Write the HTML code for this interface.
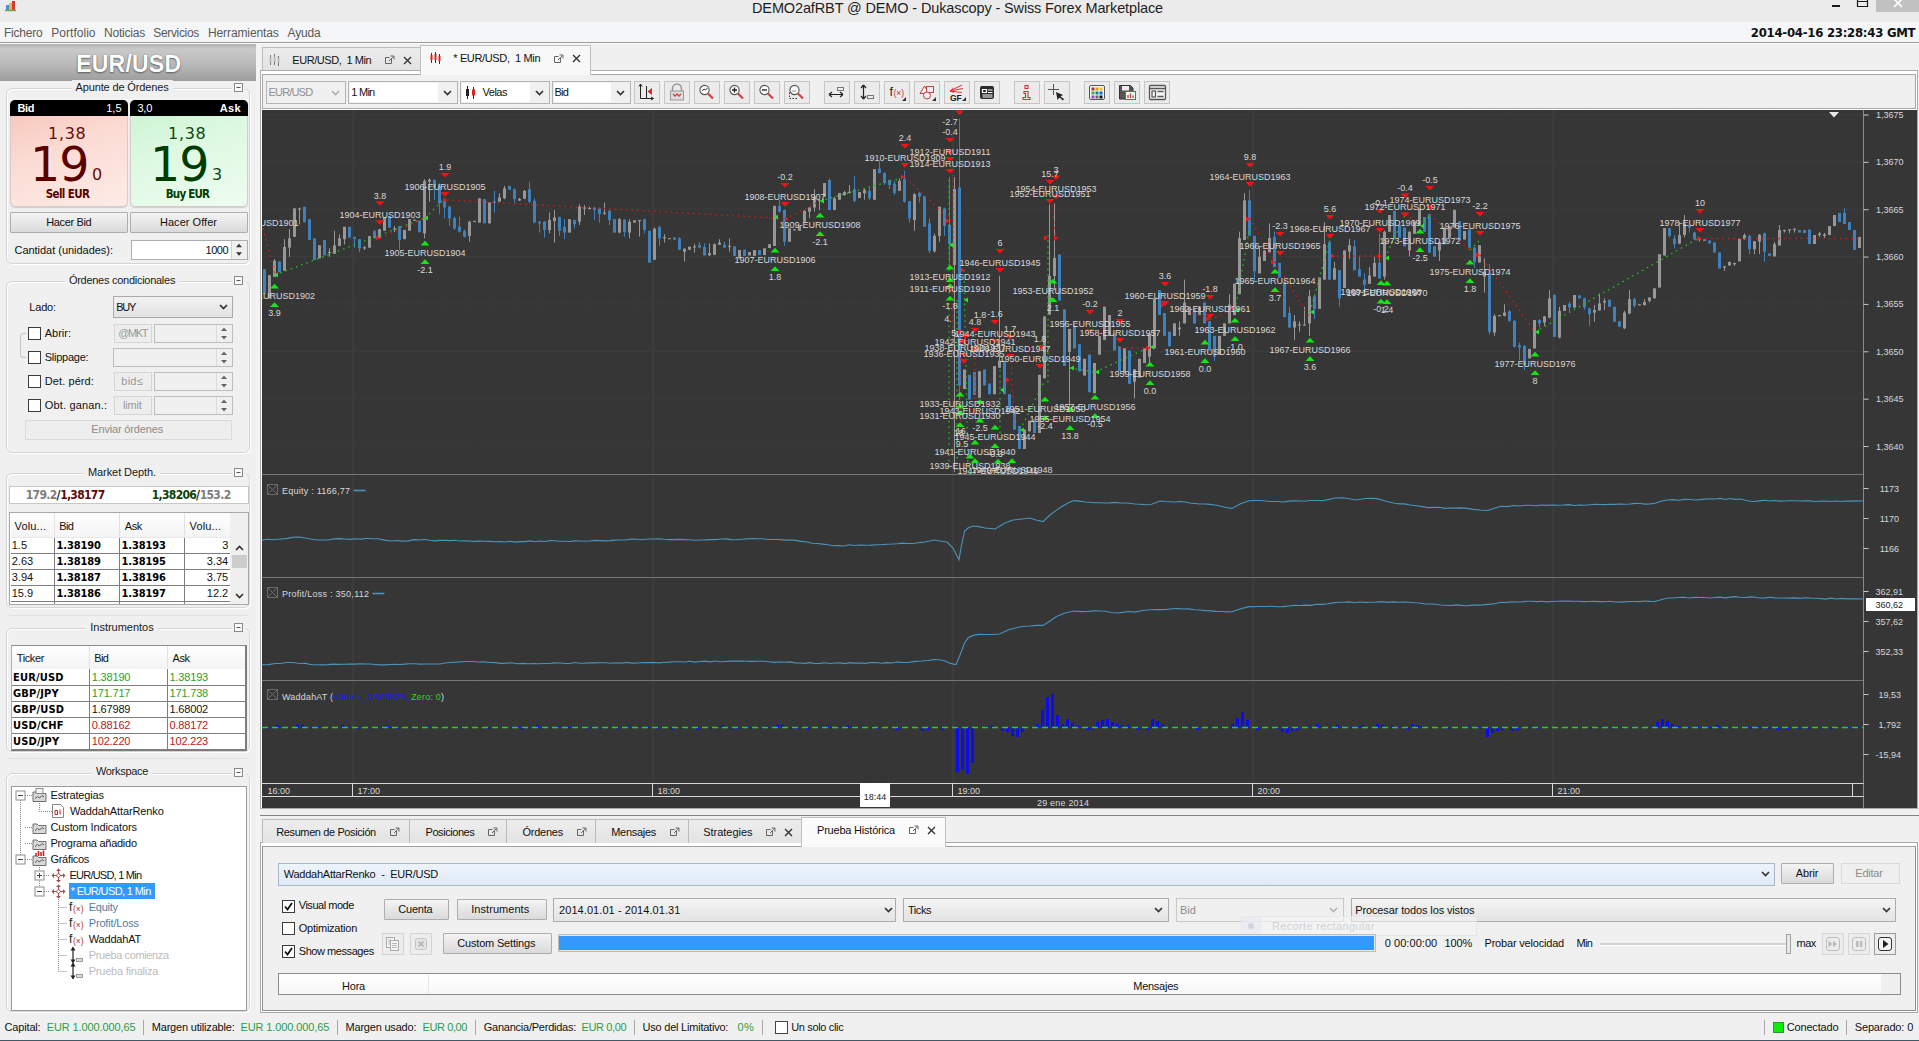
<!DOCTYPE html>
<html lang="es"><head><meta charset="utf-8"><title>DEMO2afRBT @ DEMO - Dukascopy - Swiss Forex Marketplace</title>
<style>
html,body{margin:0;padding:0;}
body{width:1919px;height:1041px;overflow:hidden;background:#f0f0f0;position:relative;font-family:"Liberation Sans",sans-serif;}
#app{position:absolute;left:0;top:0;width:1919px;height:1041px;overflow:hidden;background:#f0f0f0;}
#app div,#app span,#app svg{position:absolute;box-sizing:border-box;}
#app svg{overflow:visible;}
#app svg.clip{overflow:hidden;}
.btn{background:linear-gradient(#f4f4f4,#e4e4e4 60%,#dadada);border:1px solid #adadad;border-radius:1px;}
.fld{background:#fff;border:1px solid #abadb3;}
.grp{border:1px solid #d5d5d5;border-radius:6px;box-shadow:inset 1px 1px 0 #fff, 1px 1px 0 #fff;}
</style></head>
<body><div id="app">
<!-- p_chrome -->
<div style="left:0px;top:0px;width:1919px;height:22px;background:#ebebeb;"></div>
<span style="top:0.73px;font:normal 14.5px/1 'Liberation Sans', sans-serif;color:#1e1e1e;white-space:pre;letter-spacing:-0.13px;left:752px;">DEMO2afRBT @ DEMO - Dukascopy - Swiss Forex Marketplace</span>
<svg style="left:4px;top:0;width:16px;height:12px" viewBox="0 0 16 12"><rect x="2" y="5" width="3" height="5" fill="#4a8fd8"/><rect x="5" y="3" width="3" height="7" fill="#e9b53a"/><rect x="8" y="1" width="3" height="9" fill="#d23a3a"/><path d="M1 10.5 L12 10.5" stroke="#6aa84f" stroke-width="1.5"/></svg>
<div style="left:1876px;top:0px;width:43px;height:12px;background:#c1c1c1;"></div>
<svg style="left:1826px;top:0;width:93px;height:14px" viewBox="0 0 93 14"><rect x="6" y="5" width="8" height="2" fill="#1a1a1a"/><path d="M31.5 -1 V6.5 H41.5 V-1 M31.5 1.5 H41.5" stroke="#1a1a1a" fill="none" stroke-width="1.2"/><path d="M68 -1 L76 7 M76 -1 L68 7" stroke="#fff" stroke-width="1.6"/></svg>
<div style="left:0px;top:22px;width:1919px;height:21px;background:#f5f6f7;"></div>
<div style="left:0px;top:42px;width:1919px;height:1px;background:#9c9c9c;"></div>
<div style="left:0px;top:43px;width:1919px;height:1px;background:#fafafa;"></div>
<span style="top:26.84px;font:normal 12px/1 'Liberation Sans', sans-serif;color:#5a5a5a;white-space:pre;letter-spacing:-0.22px;left:4px;">Fichero</span>
<span style="top:26.84px;font:normal 12px/1 'Liberation Sans', sans-serif;color:#5a5a5a;white-space:pre;letter-spacing:0.03px;left:51.25px;">Portfolio</span>
<span style="top:26.84px;font:normal 12px/1 'Liberation Sans', sans-serif;color:#5a5a5a;white-space:pre;letter-spacing:-0.21px;left:104px;">Noticias</span>
<span style="top:26.84px;font:normal 12px/1 'Liberation Sans', sans-serif;color:#5a5a5a;white-space:pre;letter-spacing:-0.33px;left:153.25px;">Servicios</span>
<span style="top:26.84px;font:normal 12px/1 'Liberation Sans', sans-serif;color:#5a5a5a;white-space:pre;letter-spacing:-0.11px;left:208px;">Herramientas</span>
<span style="top:26.84px;font:normal 12px/1 'Liberation Sans', sans-serif;color:#5a5a5a;white-space:pre;letter-spacing:-0.16px;left:287.5px;">Ayuda</span>
<span style="top:26px;font:bold 13px/1 'DejaVu Sans Condensed', 'DejaVu Sans', 'Liberation Sans', sans-serif;color:#111;white-space:pre;letter-spacing:-0.25px;left:1750.75px;">2014-04-16 23:28:43 GMT</span>
<div style="left:0px;top:1013px;width:1919px;height:28px;background:#f0f0f0;"></div>
<div style="left:0px;top:1039.5px;width:1919px;height:2px;background:#3f5868;"></div>
<span style="top:1021.94px;font:normal 11px/1 'Liberation Sans', sans-serif;color:#111;white-space:pre;letter-spacing:-0.16px;left:4.5px;">Capital:</span>
<span style="top:1021.94px;font:normal 11px/1 'Liberation Sans', sans-serif;color:#2a9d4a;white-space:pre;letter-spacing:-0.11px;left:46.75px;">EUR 1.000.000,65</span>
<span style="top:1021.94px;font:normal 11px/1 'Liberation Sans', sans-serif;color:#111;white-space:pre;letter-spacing:-0.19px;left:151.75px;">Margen utilizable:</span>
<span style="top:1021.94px;font:normal 11px/1 'Liberation Sans', sans-serif;color:#2a9d4a;white-space:pre;letter-spacing:-0.11px;left:240.5px;">EUR 1.000.000,65</span>
<span style="top:1021.94px;font:normal 11px/1 'Liberation Sans', sans-serif;color:#111;white-space:pre;letter-spacing:-0.2px;left:345.5px;">Margen usado:</span>
<span style="top:1021.94px;font:normal 11px/1 'Liberation Sans', sans-serif;color:#2a9d4a;white-space:pre;letter-spacing:-0.4px;left:422.5px;">EUR 0,00</span>
<span style="top:1021.94px;font:normal 11px/1 'Liberation Sans', sans-serif;color:#111;white-space:pre;letter-spacing:-0.24px;left:483.75px;">Ganancia/Perdidas:</span>
<span style="top:1021.94px;font:normal 11px/1 'Liberation Sans', sans-serif;color:#2a9d4a;white-space:pre;letter-spacing:-0.37px;left:581.5px;">EUR 0,00</span>
<span style="top:1021.94px;font:normal 11px/1 'Liberation Sans', sans-serif;color:#111;white-space:pre;letter-spacing:-0.22px;left:642.5px;">Uso del Limitativo:</span>
<span style="top:1021.94px;font:normal 11px/1 'Liberation Sans', sans-serif;color:#2a9d4a;white-space:pre;letter-spacing:0.43px;left:737.5px;">0%</span>
<span style="top:1021.94px;font:normal 11px/1 'Liberation Sans', sans-serif;color:#111;white-space:pre;letter-spacing:-0.35px;left:791.25px;">Un solo clic</span>
<span style="top:1021.94px;font:normal 11px/1 'Liberation Sans', sans-serif;color:#111;white-space:pre;letter-spacing:-0.18px;left:1786.8px;">Conectado</span>
<span style="top:1021.94px;font:normal 11px/1 'Liberation Sans', sans-serif;color:#111;white-space:pre;letter-spacing:-0.13px;left:1854.7px;">Separado: 0</span>
<div style="left:143px;top:1020px;width:1px;height:15px;background:#a8a8a8;"></div>
<div style="left:337px;top:1020px;width:1px;height:15px;background:#a8a8a8;"></div>
<div style="left:475px;top:1020px;width:1px;height:15px;background:#a8a8a8;"></div>
<div style="left:634px;top:1020px;width:1px;height:15px;background:#a8a8a8;"></div>
<div style="left:762px;top:1020px;width:1px;height:15px;background:#a8a8a8;"></div>
<div style="left:1764px;top:1020px;width:1px;height:15px;background:#a8a8a8;"></div>
<div style="left:1846px;top:1020px;width:1px;height:15px;background:#a8a8a8;"></div>
<div style="left:775px;top:1020.5px;width:13px;height:13px;background:#fff;border:1px solid #444;"></div>
<div style="left:1773px;top:1022px;width:11px;height:11px;background:#0cec0c;border:1px solid #2a9a2a;"></div>
<!-- p_left -->
<div style="left:0px;top:44px;width:256px;height:969px;background:#f0f0f0;"></div>
<div style="left:256px;top:44px;width:4px;height:969px;background:#f3f3f3;"></div>
<div style="left:0px;top:44px;width:256px;height:37px;background:linear-gradient(#b2b2b2 0,#c9c9c9 14%,#bcbcbc 50%,#9d9d9d 100%);"></div>
<span style="top:52.53px;font:bold 23px/1 'Liberation Sans', sans-serif;color:#fff;white-space:pre;letter-spacing:0.21px;left:76.25px;text-shadow:0 1px 2px rgba(0,0,0,.45),0 0 1px rgba(0,0,0,.4);">EUR/USD</span>
<div class="grp" style="left:6px;top:88px;width:244px;height:176px;"></div>
<div style="left:71.5px;top:80px;width:101px;height:16px;background:#f0f0f0;"></div>
<span style="top:81.94px;font:normal 11px/1 'Liberation Sans', sans-serif;color:#1a1a1a;white-space:pre;letter-spacing:-0.14px;left:75.5px;">Apunte de Órdenes</span>
<div style="left:232px;top:82px;width:14px;height:12px;background:#f0f0f0;"></div>
<svg style="left:234px;top:83px;width:10px;height:10px" viewBox="0 0 10 10"><rect x="0.5" y="0.5" width="8" height="8" fill="#fafafa" stroke="#8a8a8a"/><path d="M2.5 4.5 H6.5" stroke="#555" stroke-width="1"/></svg>
<div style="left:10px;top:100px;width:117.5px;height:106.5px;background:linear-gradient(160deg,#f6c3b8,#fbdcd4 45%,#fdebe6);border:1px solid #d9c9c9;border-radius:5px;box-shadow:0 1px 1px #cfcfcf;"></div>
<div style="left:10px;top:100px;width:117.5px;height:16px;background:#000;border-radius:5px 5px 0 0;"></div>
<span style="top:102.69px;font:bold 11px/1 'Liberation Sans', sans-serif;color:#fff;white-space:pre;letter-spacing:-0.41px;left:17.5px;">Bid</span>
<span style="top:102.69px;font:normal 11px/1 'Liberation Sans', sans-serif;color:#fff;white-space:pre;letter-spacing:-0.01px;left:-478.51px;width:600px;text-align:right;">1,5</span>
<span style="top:125.66px;font:normal 16px/1 'DejaVu Sans', 'Liberation Sans', sans-serif;color:#6b0a0a;white-space:pre;letter-spacing:0.72px;left:48px;">1,38</span>
<span style="top:141.29px;font:normal 47.5px/1 'DejaVu Sans', 'Liberation Sans', sans-serif;color:#5a0000;white-space:pre;letter-spacing:-1px;left:30px;">19</span>
<span style="top:167.26px;font:normal 16px/1 'DejaVu Sans', 'Liberation Sans', sans-serif;color:#6b0a0a;white-space:pre;left:92px;">0</span>
<span style="top:188.57px;font:bold 11.5px/1 'DejaVu Sans Condensed', 'DejaVu Sans', 'Liberation Sans', sans-serif;color:#5a0000;white-space:pre;letter-spacing:-0.64px;left:45.75px;">Sell EUR</span>
<div style="left:130px;top:100px;width:117.5px;height:106.5px;background:linear-gradient(160deg,#c9f3d0,#def9e2 45%,#eefcf0);border:1px solid #d9c9c9;border-radius:5px;box-shadow:0 1px 1px #cfcfcf;"></div>
<div style="left:130px;top:100px;width:117.5px;height:16px;background:#000;border-radius:5px 5px 0 0;"></div>
<span style="top:102.69px;font:normal 11px/1 'Liberation Sans', sans-serif;color:#fff;white-space:pre;letter-spacing:-0.26px;left:137.5px;">3,0</span>
<span style="top:102.69px;font:bold 11px/1 'Liberation Sans', sans-serif;color:#fff;white-space:pre;letter-spacing:0.27px;left:-359.23px;width:600px;text-align:right;">Ask</span>
<span style="top:125.66px;font:normal 16px/1 'DejaVu Sans', 'Liberation Sans', sans-serif;color:#0c4a0c;white-space:pre;letter-spacing:0.72px;left:168px;">1,38</span>
<span style="top:141.29px;font:normal 47.5px/1 'DejaVu Sans', 'Liberation Sans', sans-serif;color:#003c00;white-space:pre;letter-spacing:-1px;left:150px;">19</span>
<span style="top:167.26px;font:normal 16px/1 'DejaVu Sans', 'Liberation Sans', sans-serif;color:#0c4a0c;white-space:pre;left:212px;">3</span>
<span style="top:188.57px;font:bold 11.5px/1 'DejaVu Sans Condensed', 'DejaVu Sans', 'Liberation Sans', sans-serif;color:#003c00;white-space:pre;letter-spacing:-0.79px;left:165.75px;">Buy EUR</span>
<div class="btn" style="left:10px;top:212px;width:117.5px;height:20.5px;"></div>
<div class="btn" style="left:130px;top:212px;width:117.5px;height:20.5px;"></div>
<span style="top:216.69px;font:normal 11px/1 'Liberation Sans', sans-serif;color:#111;white-space:pre;letter-spacing:-0.37px;left:46.25px;">Hacer Bid</span>
<span style="top:216.69px;font:normal 11px/1 'Liberation Sans', sans-serif;color:#111;white-space:pre;letter-spacing:0.03px;left:160px;">Hacer Offer</span>
<span style="top:245.19px;font:normal 11px/1 'Liberation Sans', sans-serif;color:#111;white-space:pre;letter-spacing:-0.03px;left:14.5px;">Cantidat (unidades):</span>
<div class="fld" style="left:131px;top:240px;width:116.5px;height:19.5px;"></div>
<span style="top:245.19px;font:normal 11px/1 'Liberation Sans', sans-serif;color:#111;white-space:pre;letter-spacing:-0.49px;left:205.5px;">1000</span>
<div style="left:231px;top:241px;width:15.5px;height:17.5px;background:#f0f0f0;border-left:1px solid #d0d0d0;"></div>
<svg style="left:232px;top:240px;width:14px;height:19.5px" viewBox="0 0 14 19.5"><path d="M4 7.25 L7 3.75 L10 7.25 Z M4 12.25 L7 15.75 L10 12.25 Z" fill="#333"/></svg>
<div class="grp" style="left:6px;top:281px;width:244px;height:172px;"></div>
<div style="left:64.88px;top:273px;width:114.25px;height:16px;background:#f0f0f0;"></div>
<span style="top:274.94px;font:normal 11px/1 'Liberation Sans', sans-serif;color:#1a1a1a;white-space:pre;letter-spacing:-0.27px;left:68.88px;">Órdenes condicionales</span>
<div style="left:232px;top:275px;width:14px;height:12px;background:#f0f0f0;"></div>
<svg style="left:234px;top:276px;width:10px;height:10px" viewBox="0 0 10 10"><rect x="0.5" y="0.5" width="8" height="8" fill="#fafafa" stroke="#8a8a8a"/><path d="M2.5 4.5 H6.5" stroke="#555" stroke-width="1"/></svg>
<span style="top:302.19px;font:normal 11px/1 'Liberation Sans', sans-serif;color:#111;white-space:pre;letter-spacing:-0.16px;left:29.25px;">Lado:</span>
<div style="left:113px;top:295.5px;width:119.5px;height:22.5px;background:linear-gradient(#f2f2f2,#e2e2e2);border:1px solid #aaa;"></div>
<span style="top:302.19px;font:normal 11px/1 'Liberation Sans', sans-serif;color:#111;white-space:pre;letter-spacing:-1.29px;left:116.25px;">BUY</span>
<svg style="left:218.5px;top:304px;width:9px;height:6px" viewBox="0 0 9 6"><path d="M1 1 L4.5 4.5 L8 1" fill="none" stroke="#333" stroke-width="1.7"/></svg>
<div style="left:19.5px;top:333px;width:6px;height:25px;border:1px solid #c4c4c4;border-right:none;border-radius:4px 0 0 4px;"></div>
<div style="left:28px;top:327px;width:13px;height:13px;background:#fff;border:1px solid #3c3c3c;"></div>
<span style="top:327.69px;font:normal 11px/1 'Liberation Sans', sans-serif;color:#111;white-space:pre;letter-spacing:-0.01px;left:44.75px;">Abrir:</span>
<div style="left:114px;top:323.5px;width:38px;height:19px;background:#eee;border:1px solid #d6d6d6;"></div>
<span style="top:327.69px;font:normal 11px/1 'Liberation Sans', sans-serif;color:#999;white-space:pre;letter-spacing:-1.41px;left:118.25px;">@MKT</span>
<div style="left:154px;top:323.5px;width:78.5px;height:19px;background:#f0f0f0;border:1px solid #bdbdbd;"></div>
<div style="left:216px;top:324.5px;width:1px;height:17px;background:#dcdcdc;"></div>
<svg style="left:217px;top:323.5px;width:14px;height:19px" viewBox="0 0 14 19"><path d="M4 7.0 L7 3.5 L10 7.0 Z M4 12.0 L7 15.5 L10 12.0 Z" fill="#666"/></svg>
<div style="left:28px;top:351px;width:13px;height:13px;background:#fff;border:1px solid #3c3c3c;"></div>
<span style="top:351.69px;font:normal 11px/1 'Liberation Sans', sans-serif;color:#111;white-space:pre;letter-spacing:-0.26px;left:44.75px;">Slippage:</span>
<div style="left:113px;top:347.5px;width:119.5px;height:19px;background:#f0f0f0;border:1px solid #bdbdbd;"></div>
<div style="left:216px;top:348.5px;width:1px;height:17px;background:#dcdcdc;"></div>
<svg style="left:217px;top:347.5px;width:14px;height:19px" viewBox="0 0 14 19"><path d="M4 7.0 L7 3.5 L10 7.0 Z M4 12.0 L7 15.5 L10 12.0 Z" fill="#666"/></svg>
<div style="left:28px;top:375px;width:13px;height:13px;background:#fff;border:1px solid #3c3c3c;"></div>
<span style="top:375.69px;font:normal 11px/1 'Liberation Sans', sans-serif;color:#111;white-space:pre;letter-spacing:0.09px;left:44.75px;">Det. pérd:</span>
<div style="left:114px;top:371.5px;width:38px;height:19px;background:#eee;border:1px solid #d6d6d6;"></div>
<span style="top:375.69px;font:normal 11px/1 'Liberation Sans', sans-serif;color:#999;white-space:pre;letter-spacing:0.26px;left:121.25px;">bid≤</span>
<div style="left:154px;top:371.5px;width:78.5px;height:19px;background:#f0f0f0;border:1px solid #bdbdbd;"></div>
<div style="left:216px;top:372.5px;width:1px;height:17px;background:#dcdcdc;"></div>
<svg style="left:217px;top:371.5px;width:14px;height:19px" viewBox="0 0 14 19"><path d="M4 7.0 L7 3.5 L10 7.0 Z M4 12.0 L7 15.5 L10 12.0 Z" fill="#666"/></svg>
<div style="left:28px;top:399px;width:13px;height:13px;background:#fff;border:1px solid #3c3c3c;"></div>
<span style="top:399.69px;font:normal 11px/1 'Liberation Sans', sans-serif;color:#111;white-space:pre;letter-spacing:0.16px;left:44.75px;">Obt. ganan.:</span>
<div style="left:114px;top:395.5px;width:38px;height:19px;background:#eee;border:1px solid #d6d6d6;"></div>
<span style="top:399.69px;font:normal 11px/1 'Liberation Sans', sans-serif;color:#999;white-space:pre;letter-spacing:-0.16px;left:123px;">limit</span>
<div style="left:154px;top:395.5px;width:78.5px;height:19px;background:#f0f0f0;border:1px solid #bdbdbd;"></div>
<div style="left:216px;top:396.5px;width:1px;height:17px;background:#dcdcdc;"></div>
<svg style="left:217px;top:395.5px;width:14px;height:19px" viewBox="0 0 14 19"><path d="M4 7.0 L7 3.5 L10 7.0 Z M4 12.0 L7 15.5 L10 12.0 Z" fill="#666"/></svg>
<div style="left:25px;top:419.5px;width:206.5px;height:20px;background:#eee;border:1px solid #dadada;"></div>
<span style="top:424.19px;font:normal 11px/1 'Liberation Sans', sans-serif;color:#8c8c8c;white-space:pre;letter-spacing:-0.16px;left:91.25px;">Enviar órdenes</span>
<div class="grp" style="left:6px;top:473px;width:244px;height:135px;"></div>
<div style="left:84px;top:465px;width:76px;height:16px;background:#f0f0f0;"></div>
<span style="top:466.94px;font:normal 11px/1 'Liberation Sans', sans-serif;color:#1a1a1a;white-space:pre;letter-spacing:-0.08px;left:88px;">Market Depth.</span>
<div style="left:232px;top:467px;width:14px;height:12px;background:#f0f0f0;"></div>
<svg style="left:234px;top:468px;width:10px;height:10px" viewBox="0 0 10 10"><rect x="0.5" y="0.5" width="8" height="8" fill="#fafafa" stroke="#8a8a8a"/><path d="M2.5 4.5 H6.5" stroke="#555" stroke-width="1"/></svg>
<div style="left:9px;top:486px;width:239.5px;height:18px;background:#fff;border:1px solid #c8c8c8;"></div>
<span style="top:489.34px;font:bold 12px/1 'DejaVu Sans Condensed', 'DejaVu Sans', 'Liberation Sans', sans-serif;color:#7d7d7d;white-space:pre;letter-spacing:-0.67px;left:25.75px;">179.2</span>
<span style="top:489.34px;font:bold 12px/1 'DejaVu Sans Condensed', 'DejaVu Sans', 'Liberation Sans', sans-serif;color:#222;white-space:pre;letter-spacing:-0.38px;left:56.57px;">/</span>
<span style="top:489.34px;font:bold 12px/1 'DejaVu Sans Condensed', 'DejaVu Sans', 'Liberation Sans', sans-serif;color:#5c0a0a;white-space:pre;letter-spacing:-0.69px;left:60.13px;">1,38177</span>
<span style="top:489.34px;font:bold 12px/1 'DejaVu Sans Condensed', 'DejaVu Sans', 'Liberation Sans', sans-serif;color:#0c400c;white-space:pre;letter-spacing:-0.69px;left:151.75px;">1,38206</span>
<span style="top:489.34px;font:bold 12px/1 'DejaVu Sans Condensed', 'DejaVu Sans', 'Liberation Sans', sans-serif;color:#222;white-space:pre;letter-spacing:-0.38px;left:196.12px;">/</span>
<span style="top:489.34px;font:bold 12px/1 'DejaVu Sans Condensed', 'DejaVu Sans', 'Liberation Sans', sans-serif;color:#7d7d7d;white-space:pre;letter-spacing:-0.67px;left:199.68px;">153.2</span>
<div style="left:9px;top:512px;width:239.5px;height:92.5px;background:#fff;border:1px solid #a8a8a8;overflow:hidden;"></div>
<div style="left:10.5px;top:513px;width:219.5px;height:24px;background:linear-gradient(#fff,#f4f4f4);"></div>
<div style="left:230px;top:513px;width:17.5px;height:90.5px;background:#f0f0f0;"></div>
<div style="left:54px;top:513px;width:1px;height:24px;background:#e2e2e2;"></div>
<div style="left:54px;top:537px;width:1px;height:67px;background:#7e7e7e;"></div>
<div style="left:119px;top:513px;width:1px;height:24px;background:#e2e2e2;"></div>
<div style="left:119px;top:537px;width:1px;height:67px;background:#7e7e7e;"></div>
<div style="left:184px;top:513px;width:1px;height:24px;background:#e2e2e2;"></div>
<div style="left:184px;top:537px;width:1px;height:67px;background:#7e7e7e;"></div>
<span style="top:520.69px;font:normal 11px/1 'Liberation Sans', sans-serif;color:#111;white-space:pre;letter-spacing:0.17px;left:14.5px;">Volu...</span>
<span style="top:520.69px;font:normal 11px/1 'Liberation Sans', sans-serif;color:#111;white-space:pre;letter-spacing:-0.63px;left:59.25px;">Bid</span>
<span style="top:520.69px;font:normal 11px/1 'Liberation Sans', sans-serif;color:#111;white-space:pre;letter-spacing:-0.45px;left:124.75px;">Ask</span>
<span style="top:520.69px;font:normal 11px/1 'Liberation Sans', sans-serif;color:#111;white-space:pre;letter-spacing:0.17px;left:189.5px;">Volu...</span>
<div style="left:10.5px;top:553px;width:219.5px;height:1px;background:#7e7e7e;"></div>
<span style="top:540.19px;font:normal 11px/1 'Liberation Sans', sans-serif;color:#111;white-space:pre;left:11.75px;">1.5</span>
<span style="top:540.19px;font:bold 11px/1 'DejaVu Sans Condensed', 'DejaVu Sans', 'Liberation Sans', sans-serif;color:#000;white-space:pre;letter-spacing:-0.12px;left:56.5px;">1.38190</span>
<span style="top:540.19px;font:bold 11px/1 'DejaVu Sans Condensed', 'DejaVu Sans', 'Liberation Sans', sans-serif;color:#000;white-space:pre;letter-spacing:-0.12px;left:121.5px;">1.38193</span>
<span style="top:540.19px;font:normal 11px/1 'Liberation Sans', sans-serif;color:#111;white-space:pre;left:-371.75px;width:600px;text-align:right;">3</span>
<div style="left:10.5px;top:569px;width:219.5px;height:1px;background:#7e7e7e;"></div>
<span style="top:556.19px;font:normal 11px/1 'Liberation Sans', sans-serif;color:#111;white-space:pre;left:11.75px;">2.63</span>
<span style="top:556.19px;font:bold 11px/1 'DejaVu Sans Condensed', 'DejaVu Sans', 'Liberation Sans', sans-serif;color:#000;white-space:pre;letter-spacing:-0.12px;left:56.5px;">1.38189</span>
<span style="top:556.19px;font:bold 11px/1 'DejaVu Sans Condensed', 'DejaVu Sans', 'Liberation Sans', sans-serif;color:#000;white-space:pre;letter-spacing:-0.12px;left:121.5px;">1.38195</span>
<span style="top:556.19px;font:normal 11px/1 'Liberation Sans', sans-serif;color:#111;white-space:pre;left:-371.75px;width:600px;text-align:right;">3.34</span>
<div style="left:10.5px;top:585px;width:219.5px;height:1px;background:#7e7e7e;"></div>
<span style="top:572.19px;font:normal 11px/1 'Liberation Sans', sans-serif;color:#111;white-space:pre;left:11.75px;">3.94</span>
<span style="top:572.19px;font:bold 11px/1 'DejaVu Sans Condensed', 'DejaVu Sans', 'Liberation Sans', sans-serif;color:#000;white-space:pre;letter-spacing:-0.12px;left:56.5px;">1.38187</span>
<span style="top:572.19px;font:bold 11px/1 'DejaVu Sans Condensed', 'DejaVu Sans', 'Liberation Sans', sans-serif;color:#000;white-space:pre;letter-spacing:-0.12px;left:121.5px;">1.38196</span>
<span style="top:572.19px;font:normal 11px/1 'Liberation Sans', sans-serif;color:#111;white-space:pre;left:-371.75px;width:600px;text-align:right;">3.75</span>
<div style="left:10.5px;top:601px;width:219.5px;height:1px;background:#7e7e7e;"></div>
<span style="top:588.19px;font:normal 11px/1 'Liberation Sans', sans-serif;color:#111;white-space:pre;left:11.75px;">15.9</span>
<span style="top:588.19px;font:bold 11px/1 'DejaVu Sans Condensed', 'DejaVu Sans', 'Liberation Sans', sans-serif;color:#000;white-space:pre;letter-spacing:-0.12px;left:56.5px;">1.38186</span>
<span style="top:588.19px;font:bold 11px/1 'DejaVu Sans Condensed', 'DejaVu Sans', 'Liberation Sans', sans-serif;color:#000;white-space:pre;letter-spacing:-0.12px;left:121.5px;">1.38197</span>
<span style="top:588.19px;font:normal 11px/1 'Liberation Sans', sans-serif;color:#111;white-space:pre;left:-371.75px;width:600px;text-align:right;">12.2</span>
<div style="left:10.5px;top:537px;width:219.5px;height:1px;background:#e8e8e8;"></div>
<svg style="left:235px;top:545px;width:9px;height:6px" viewBox="0 0 9 6"><path d="M1 5 L4.5 1.5 L8 5" fill="none" stroke="#333" stroke-width="1.7"/></svg>
<svg style="left:235px;top:593px;width:9px;height:6px" viewBox="0 0 9 6"><path d="M1 1 L4.5 4.5 L8 1" fill="none" stroke="#333" stroke-width="1.7"/></svg>
<div style="left:232px;top:555px;width:15px;height:12.5px;background:#cdcdcd;"></div>
<div class="grp" style="left:6px;top:628px;width:244px;height:124px;"></div>
<div style="left:86.25px;top:620px;width:71.5px;height:16px;background:#f0f0f0;"></div>
<span style="top:621.94px;font:normal 11px/1 'Liberation Sans', sans-serif;color:#1a1a1a;white-space:pre;letter-spacing:-0.01px;left:90.25px;">Instrumentos</span>
<div style="left:232px;top:622px;width:14px;height:12px;background:#f0f0f0;"></div>
<svg style="left:234px;top:623px;width:10px;height:10px" viewBox="0 0 10 10"><rect x="0.5" y="0.5" width="8" height="8" fill="#fafafa" stroke="#8a8a8a"/><path d="M2.5 4.5 H6.5" stroke="#555" stroke-width="1"/></svg>
<div style="left:11px;top:644.5px;width:236px;height:106px;background:#fff;border:1px solid #8a8a8a;border-left-color:#b0b0b0;border-right:2px solid #7c7c7c;border-bottom:2px solid #7c7c7c;"></div>
<div style="left:12px;top:645.5px;width:233px;height:23px;background:linear-gradient(#fff,#f3f3f3);"></div>
<div style="left:89px;top:646px;width:1px;height:22px;background:#e2e2e2;"></div>
<div style="left:89px;top:669px;width:1px;height:80px;background:#7e7e7e;"></div>
<div style="left:167px;top:646px;width:1px;height:22px;background:#e2e2e2;"></div>
<div style="left:167px;top:669px;width:1px;height:80px;background:#7e7e7e;"></div>
<span style="top:652.69px;font:normal 11px/1 'Liberation Sans', sans-serif;color:#111;white-space:pre;letter-spacing:-0.38px;left:16.75px;">Ticker</span>
<span style="top:652.69px;font:normal 11px/1 'Liberation Sans', sans-serif;color:#111;white-space:pre;letter-spacing:-0.63px;left:94.25px;">Bid</span>
<span style="top:652.69px;font:normal 11px/1 'Liberation Sans', sans-serif;color:#111;white-space:pre;letter-spacing:-0.45px;left:172.5px;">Ask</span>
<span style="top:672.19px;font:bold 11px/1 'DejaVu Sans Condensed', 'DejaVu Sans', 'Liberation Sans', sans-serif;color:#000;white-space:pre;letter-spacing:0.19px;left:13px;">EUR/USD</span>
<span style="top:672.19px;font:normal 11px/1 'Liberation Sans', sans-serif;color:#2aa12a;white-space:pre;letter-spacing:-0.18px;left:91.75px;">1.38190</span>
<span style="top:672.19px;font:normal 11px/1 'Liberation Sans', sans-serif;color:#2aa12a;white-space:pre;letter-spacing:-0.18px;left:169.5px;">1.38193</span>
<div style="left:12px;top:685px;width:233px;height:1px;background:#7e7e7e;"></div>
<span style="top:688.19px;font:bold 11px/1 'DejaVu Sans Condensed', 'DejaVu Sans', 'Liberation Sans', sans-serif;color:#000;white-space:pre;letter-spacing:0.17px;left:13px;">GBP/JPY</span>
<span style="top:688.19px;font:normal 11px/1 'Liberation Sans', sans-serif;color:#2aa12a;white-space:pre;letter-spacing:-0.18px;left:91.75px;">171.717</span>
<span style="top:688.19px;font:normal 11px/1 'Liberation Sans', sans-serif;color:#2aa12a;white-space:pre;letter-spacing:-0.18px;left:169.5px;">171.738</span>
<div style="left:12px;top:701px;width:233px;height:1px;background:#7e7e7e;"></div>
<span style="top:704.19px;font:bold 11px/1 'DejaVu Sans Condensed', 'DejaVu Sans', 'Liberation Sans', sans-serif;color:#000;white-space:pre;letter-spacing:0.19px;left:13px;">GBP/USD</span>
<span style="top:704.19px;font:normal 11px/1 'Liberation Sans', sans-serif;color:#111;white-space:pre;letter-spacing:-0.18px;left:91.75px;">1.67989</span>
<span style="top:704.19px;font:normal 11px/1 'Liberation Sans', sans-serif;color:#111;white-space:pre;letter-spacing:-0.18px;left:169.5px;">1.68002</span>
<div style="left:12px;top:717px;width:233px;height:1px;background:#7e7e7e;"></div>
<span style="top:720.19px;font:bold 11px/1 'DejaVu Sans Condensed', 'DejaVu Sans', 'Liberation Sans', sans-serif;color:#000;white-space:pre;letter-spacing:0.19px;left:13px;">USD/CHF</span>
<span style="top:720.19px;font:normal 11px/1 'Liberation Sans', sans-serif;color:#b01c1c;white-space:pre;letter-spacing:-0.18px;left:91.75px;">0.88162</span>
<span style="top:720.19px;font:normal 11px/1 'Liberation Sans', sans-serif;color:#b01c1c;white-space:pre;letter-spacing:-0.18px;left:169.5px;">0.88172</span>
<div style="left:12px;top:733px;width:233px;height:1px;background:#7e7e7e;"></div>
<span style="top:736.19px;font:bold 11px/1 'DejaVu Sans Condensed', 'DejaVu Sans', 'Liberation Sans', sans-serif;color:#000;white-space:pre;letter-spacing:0.17px;left:13px;">USD/JPY</span>
<span style="top:736.19px;font:normal 11px/1 'Liberation Sans', sans-serif;color:#b01c1c;white-space:pre;letter-spacing:-0.18px;left:91.75px;">102.220</span>
<span style="top:736.19px;font:normal 11px/1 'Liberation Sans', sans-serif;color:#b01c1c;white-space:pre;letter-spacing:-0.18px;left:169.5px;">102.223</span>
<div style="left:8px;top:758px;width:240px;height:1px;background:#e2e2e2;"></div>
<div style="left:8px;top:615px;width:240px;height:1px;background:#e2e2e2;"></div>
<div class="grp" style="left:6px;top:772.5px;width:244px;height:239.5px;"></div>
<div style="left:91.88px;top:764.5px;width:60.25px;height:16px;background:#f0f0f0;"></div>
<span style="top:766.44px;font:normal 11px/1 'Liberation Sans', sans-serif;color:#1a1a1a;white-space:pre;letter-spacing:-0.29px;left:95.88px;">Workspace</span>
<div style="left:232px;top:766.5px;width:14px;height:12px;background:#f0f0f0;"></div>
<svg style="left:234px;top:767.5px;width:10px;height:10px" viewBox="0 0 10 10"><rect x="0.5" y="0.5" width="8" height="8" fill="#fafafa" stroke="#8a8a8a"/><path d="M2.5 4.5 H6.5" stroke="#555" stroke-width="1"/></svg>
<div style="left:11px;top:786px;width:236px;height:224.5px;background:#fff;border:1px solid #9a9a9a;"></div>
<svg style="left:12px;top:787px;width:234px;height:220px" viewBox="12 787 234 220"><path d="M20.5 800 V859 M25 795.5 H32 M25 827.5 H32 M25 843.5 H32 M25 859.5 H32 M39.5 803 V811.5 H52 M39.5 867 V891 M44 875.5 H50 M44 891.5 H50 M58.5 899 V971.5 M58.5 907.5 H67 M58.5 923.5 H67 M58.5 939.5 H67 M58.5 955.5 H67 M58.5 971.5 H67" stroke="#8a8a8a" stroke-width="1" stroke-dasharray="1 1" fill="none"/><rect x="16.0" y="791.0" width="9" height="9" fill="#fff" stroke="#8c8c8c"/><path d="M18.0 795.5 H23.0" stroke="#444"/><rect x="16.0" y="855.0" width="9" height="9" fill="#fff" stroke="#8c8c8c"/><path d="M18.0 859.5 H23.0" stroke="#444"/><rect x="35.0" y="871.0" width="9" height="9" fill="#fff" stroke="#8c8c8c"/><path d="M37.0 875.5 H42.0" stroke="#444"/><path d="M39.5 873.0 V878.0" stroke="#444"/><rect x="35.0" y="887.0" width="9" height="9" fill="#fff" stroke="#8c8c8c"/><path d="M37.0 891.5 H42.0" stroke="#444"/><path d="M33 792.0 h4 l1.5 1.5 h7.5 v8 h-13 z" fill="#d8d8d8" stroke="#6e6e6e" stroke-width="1"/><path d="M35 798.5 l2.5 -2 l2 1.5 l2.5 -2.5 l2 1.5" fill="none" stroke="#555" stroke-width="1"/><rect x="36" y="788.5" width="7" height="5" fill="#f4f4f4" stroke="#777" stroke-width="0.8"/><path d="M33 824.0 h4 l1.5 1.5 h7.5 v8 h-13 z" fill="#d8d8d8" stroke="#6e6e6e" stroke-width="1"/><path d="M35 830.5 l2.5 -2 l2 1.5 l2.5 -2.5 l2 1.5" fill="none" stroke="#555" stroke-width="1"/><path d="M33 840.0 h4 l1.5 1.5 h7.5 v8 h-13 z" fill="#d8d8d8" stroke="#6e6e6e" stroke-width="1"/><path d="M35 846.5 l2.5 -2 l2 1.5 l2.5 -2.5 l2 1.5" fill="none" stroke="#555" stroke-width="1"/><path d="M33 856.0 h4 l1.5 1.5 h7.5 v8 h-13 z" fill="#d8d8d8" stroke="#6e6e6e" stroke-width="1"/><path d="M35 862.5 l2.5 -2 l2 1.5 l2.5 -2.5 l2 1.5" fill="none" stroke="#555" stroke-width="1"/><path d="M36 856.0 v-3 M38.5 856.0 v-5 M41 856.0 v-4 M43.5 856.0 v-5.5" stroke="#c22" stroke-width="1.6"/><path d="M52.5 804.5 h8 l3 3 v10 h-11 z" fill="#fff" stroke="#888"/><path d="M55 814.5 v-4 h2.5 v4 z M60 814.5 v-5" stroke="#c22" fill="none" stroke-width="1"/><path d="M52.5 875.5 H64.5 M58.5 869.5 V881.5" stroke="#9a5050" stroke-width="1"/><path d="M51.5 875.5 l2.5 -2.5 v5 z M65.5 875.5 l-2.5 -2.5 v5 z M58.5 868.5 l-2.5 2.5 h5 z M58.5 882.5 l-2.5 -2.5 h5 z" fill="#9a5050"/><circle cx="58.5" cy="875.5" r="1.8" fill="#fff" stroke="#a04040" stroke-width="0.8"/><path d="M52.5 891.5 H64.5 M58.5 885.5 V897.5" stroke="#9a5050" stroke-width="1"/><path d="M51.5 891.5 l2.5 -2.5 v5 z M65.5 891.5 l-2.5 -2.5 v5 z M58.5 884.5 l-2.5 2.5 h5 z M58.5 898.5 l-2.5 -2.5 h5 z" fill="#9a5050"/><circle cx="58.5" cy="891.5" r="1.8" fill="#fff" stroke="#a04040" stroke-width="0.8"/><rect x="69" y="883" width="86" height="16" fill="#3399ff"/><text x="50.5" y="799" font-family="'Liberation Sans', sans-serif" font-size="11" textLength="53.5" fill="#111">Estrategias</text><text x="70" y="815" font-family="'Liberation Sans', sans-serif" font-size="11" textLength="93.75" fill="#111">WaddahAttarRenko</text><text x="50.5" y="831" font-family="'Liberation Sans', sans-serif" font-size="11" textLength="86.5" fill="#111">Custom Indicators</text><text x="50.5" y="847" font-family="'Liberation Sans', sans-serif" font-size="11" textLength="86.5" fill="#111">Programa añadido</text><text x="50.5" y="863" font-family="'Liberation Sans', sans-serif" font-size="11" textLength="38.75" fill="#111">Gráficos</text><text x="69.5" y="879" font-family="'Liberation Sans', sans-serif" font-size="11" textLength="72.5" fill="#111">EUR/USD, 1 Min</text><text x="70.75" y="895" font-family="'Liberation Sans', sans-serif" font-size="11" textLength="80.5" fill="#fff">* EUR/USD, 1 Min</text><text x="69" y="911.0" font-family="'Liberation Sans', sans-serif" font-size="12" fill="#222">f</text><text x="73" y="911.5" font-family="'Liberation Sans', sans-serif" font-size="8.5" fill="#b03030">(×)</text><text x="88.75" y="911.0" font-family="'Liberation Sans', sans-serif" font-size="11" textLength="29.25" fill="#4f7da0">Equity</text><text x="69" y="927.0" font-family="'Liberation Sans', sans-serif" font-size="12" fill="#222">f</text><text x="73" y="927.5" font-family="'Liberation Sans', sans-serif" font-size="8.5" fill="#b03030">(×)</text><text x="88.75" y="927.0" font-family="'Liberation Sans', sans-serif" font-size="11" textLength="50.25" fill="#4f7da0">Profit/Loss</text><text x="69" y="943.0" font-family="'Liberation Sans', sans-serif" font-size="12" fill="#222">f</text><text x="73" y="943.5" font-family="'Liberation Sans', sans-serif" font-size="8.5" fill="#b03030">(×)</text><text x="88.75" y="943.0" font-family="'Liberation Sans', sans-serif" font-size="11" textLength="52.5" fill="#111">WaddahAT</text><path d="M73 947.5 V962.5" stroke="#222" stroke-width="1.2"/><path d="M73 946.5 l-2.5 4 h5 z M73 963.5 l-2.5 -4 h5 z" fill="#222"/><rect x="76.5" y="958.5" width="6" height="3" fill="#ddd" stroke="#888" stroke-width="0.8"/><text x="88.75" y="959.0" font-family="'Liberation Sans', sans-serif" font-size="11" textLength="80.25" fill="#bcbcbc">Prueba comienza</text><path d="M73 963.5 V978.5" stroke="#222" stroke-width="1.2"/><path d="M73 962.5 l-2.5 4 h5 z M73 979.5 l-2.5 -4 h5 z" fill="#222"/><rect x="76.5" y="974.5" width="6" height="3" fill="#ddd" stroke="#888" stroke-width="0.8"/><text x="88.75" y="975.0" font-family="'Liberation Sans', sans-serif" font-size="11" textLength="69.7" fill="#bcbcbc">Prueba finaliza</text></svg>
<!-- p_chart -->
<div style="left:262px;top:47px;width:159px;height:24px;background:linear-gradient(#ececec,#e2e2e2);border:1px solid #bcbcbc;border-bottom:none;"></div>
<svg style="left:268px;top:54px;width:14px;height:12px" viewBox="0 0 14 12"><path d="M2.5 1v10M6.5 0v11M10.5 2v10" stroke="#777" stroke-width="1"/><rect x="1.500" y="3" width="2" height="5" fill="#bbb"/><rect x="5.500" y="2" width="2" height="6" fill="#bbb"/><rect x="9.500" y="4" width="2" height="5" fill="#bbb"/></svg>
<span style="top:54.69px;font:normal 11px/1 'Liberation Sans', sans-serif;color:#111;white-space:pre;letter-spacing:-0.44px;left:292.25px;">EUR/USD,  1 Min</span>
<svg style="left:385px;top:55px;width:10px;height:10px" viewBox="0 0 10 10"><path d="M6.5 3.5v5h-6v-6h4" fill="none" stroke="#666" stroke-width="1"/><path d="M4 6L8.5 1.5M5.5 1h3.5v3.5" fill="none" stroke="#666" stroke-width="1"/></svg>
<svg style="left:402.5px;top:55.5px;width:9px;height:9px" viewBox="0 0 9 9"><path d="M1 1l7 7M8 1l-7 7" stroke="#333" stroke-width="1.4"/></svg>
<div style="left:260px;top:70px;width:1658px;height:739px;border:1px solid #adadad;background:#fff;"></div>
<div style="left:262px;top:74px;width:1654px;height:35px;border:1px solid #a6a6a6;background:#f0f0f0;"></div>
<div style="left:420px;top:45px;width:171px;height:30px;background:#f8f8f8;border:1px solid #c0c0c0;border-bottom:none;"></div>
<svg style="left:429px;top:52px;width:14px;height:12px" viewBox="0 0 14 12"><path d="M2.5 1v10M6.5 0v11M10.5 2v10" stroke="#333" stroke-width="1"/><rect x="1.500" y="3" width="2" height="5" fill="#d22"/><rect x="5.500" y="2" width="2" height="6" fill="#d22"/><rect x="9.500" y="4" width="2" height="5" fill="#d22"/></svg>
<span style="top:53.19px;font:normal 11px/1 'Liberation Sans', sans-serif;color:#111;white-space:pre;letter-spacing:-0.35px;left:453.25px;">* EUR/USD,  1 Min</span>
<svg style="left:554px;top:53.5px;width:10px;height:10px" viewBox="0 0 10 10"><path d="M6.5 3.5v5h-6v-6h4" fill="none" stroke="#666" stroke-width="1"/><path d="M4 6L8.5 1.5M5.5 1h3.5v3.5" fill="none" stroke="#666" stroke-width="1"/></svg>
<svg style="left:571.5px;top:54px;width:9px;height:9px" viewBox="0 0 9 9"><path d="M1 1l7 7M8 1l-7 7" stroke="#333" stroke-width="1.4"/></svg>
<div style="left:266px;top:80.5px;width:79.5px;height:23.5px;background:#f0f0f0;border:1px solid #b4b4b4;"></div>
<span style="top:86.69px;font:normal 11px/1 'Liberation Sans', sans-serif;color:#8f8f8f;white-space:pre;letter-spacing:-0.82px;left:268.5px;">EUR/USD</span>
<svg style="left:330.5px;top:90px;width:9px;height:6px" viewBox="0 0 9 6"><path d="M1 1 L4.5 4.5 L8 1" fill="none" stroke="#b0b0b0" stroke-width="1.7"/></svg>
<div style="left:348px;top:80.5px;width:109.5px;height:23.5px;background:#f0f0f0;border:1px solid #b4b4b4;"></div>
<div style="left:350px;top:82.5px;width:87.5px;height:19.5px;background:#fff;"></div>
<span style="top:86.69px;font:normal 11px/1 'Liberation Sans', sans-serif;color:#111;white-space:pre;letter-spacing:-0.73px;left:351.25px;">1 Min</span>
<svg style="left:442.5px;top:90px;width:9px;height:6px" viewBox="0 0 9 6"><path d="M1 1 L4.5 4.5 L8 1" fill="none" stroke="#333" stroke-width="1.7"/></svg>
<div style="left:460px;top:80.5px;width:89.5px;height:23.5px;background:#f0f0f0;border:1px solid #b4b4b4;"></div>
<div style="left:462px;top:82.5px;width:67.5px;height:19.5px;background:#fff;"></div>
<span style="top:86.69px;font:normal 11px/1 'Liberation Sans', sans-serif;color:#111;white-space:pre;letter-spacing:-0.48px;left:482.5px;">Velas</span>
<svg style="left:534.5px;top:90px;width:9px;height:6px" viewBox="0 0 9 6"><path d="M1 1 L4.5 4.5 L8 1" fill="none" stroke="#333" stroke-width="1.7"/></svg>
<div style="left:552px;top:80.5px;width:79px;height:23.5px;background:#f0f0f0;border:1px solid #b4b4b4;"></div>
<div style="left:554px;top:82.5px;width:57px;height:19.5px;background:#fff;"></div>
<span style="top:86.69px;font:normal 11px/1 'Liberation Sans', sans-serif;color:#111;white-space:pre;letter-spacing:-0.72px;left:554.5px;">Bid</span>
<svg style="left:616px;top:90px;width:9px;height:6px" viewBox="0 0 9 6"><path d="M1 1 L4.5 4.5 L8 1" fill="none" stroke="#333" stroke-width="1.7"/></svg>
<svg style="left:465px;top:86px;width:12px;height:13px" viewBox="0 0 12 13"><path d="M2.5 0v13M8.5 1v12" stroke="#222"/><rect x="1" y="3" width="3" height="7" fill="#222"/><rect x="7" y="3.5" width="3" height="6" fill="#d22"/></svg>
<div style="left:634px;top:80.5px;width:25.5px;height:23.5px;background:#ebebeb;border:1px solid #c6c6c6;"></div>
<svg style="left:637px;top:83px;width:20px;height:19px" viewBox="0 0 20 19"><path d="M3.5 1v14.5h13M3.5 1l-1.5 2.5M3.5 1l1.5 2.5M16.5 15.5l-2.5-1.5M16.5 15.5l-2.5 1.5" stroke="#222" fill="none"/><path d="M9.5 3v12" stroke="#222"/><path d="M15 5v7l-4.5-3.5z" fill="#d22"/></svg>
<div style="left:664px;top:80.5px;width:25.5px;height:23.5px;background:#ebebeb;border:1px solid #c6c6c6;"></div>
<svg style="left:667px;top:83px;width:20px;height:19px" viewBox="0 0 20 19"><path d="M5.5 8V5.5a4.5 4.5 0 0 1 9 0V8" fill="none" stroke="#999" stroke-width="1.6"/><rect x="3.5" y="8" width="13" height="9" fill="#dcdcdc" stroke="#999"/><path d="M6 11l2 2l2-2l2 2l2-2" stroke="#c44" fill="none" stroke-width="1.3"/></svg>
<div style="left:694px;top:80.5px;width:25.5px;height:23.5px;background:#ebebeb;border:1px solid #c6c6c6;"></div>
<svg style="left:697px;top:83px;width:20px;height:19px" viewBox="0 0 20 19"><circle cx="7.5" cy="7" r="4.6" fill="#fafafa" stroke="#555" stroke-width="1.1"/><path d="M11 10.5l5 5" stroke="#c44" stroke-width="2.2"/><path d="M5 8l2-2l1.5 1l2-2" stroke="#333" fill="none"/></svg>
<div style="left:724px;top:80.5px;width:25.5px;height:23.5px;background:#ebebeb;border:1px solid #c6c6c6;"></div>
<svg style="left:727px;top:83px;width:20px;height:19px" viewBox="0 0 20 19"><circle cx="7.5" cy="7" r="4.6" fill="#fafafa" stroke="#555" stroke-width="1.1"/><path d="M11 10.5l5 5" stroke="#c44" stroke-width="2.2"/><path d="M5 7h5M7.5 4.5v5" stroke="#222" stroke-width="1.3"/></svg>
<div style="left:754px;top:80.5px;width:25.5px;height:23.5px;background:#ebebeb;border:1px solid #c6c6c6;"></div>
<svg style="left:757px;top:83px;width:20px;height:19px" viewBox="0 0 20 19"><circle cx="7.5" cy="7" r="4.6" fill="#fafafa" stroke="#555" stroke-width="1.1"/><path d="M11 10.5l5 5" stroke="#c44" stroke-width="2.2"/><path d="M5 7h5" stroke="#222" stroke-width="1.3"/></svg>
<div style="left:784px;top:80.5px;width:25.5px;height:23.5px;background:#ebebeb;border:1px solid #c6c6c6;"></div>
<svg style="left:787px;top:83px;width:20px;height:19px" viewBox="0 0 20 19"><circle cx="7.5" cy="7" r="4.6" fill="#fafafa" stroke="#555" stroke-width="1.1"/><path d="M11 10.5l5 5" stroke="#c44" stroke-width="2.2"/><path d="M2.5 9.5v6h8" stroke="#333" fill="none" stroke-dasharray="1.5 1.5"/><path d="M5.5 8h4" stroke="#333" stroke-dasharray="1 1"/></svg>
<div style="left:824px;top:80.5px;width:25.5px;height:23.5px;background:#ebebeb;border:1px solid #c6c6c6;"></div>
<svg style="left:827px;top:83px;width:20px;height:19px" viewBox="0 0 20 19"><path d="M2 11.5h14M2 11.5l3-2.5M2 11.5l3 2.5M16 11.5l-3-2.5M16 11.5l-3 2.5" stroke="#222" fill="none" stroke-width="1.2"/><rect x="10.5" y="4.500" width="6" height="3" fill="#eee" stroke="#777"/></svg>
<div style="left:854px;top:80.5px;width:25.5px;height:23.5px;background:#ebebeb;border:1px solid #c6c6c6;"></div>
<svg style="left:857px;top:83px;width:20px;height:19px" viewBox="0 0 20 19"><path d="M6.500 2v14M6.500 2l-2.500 3M6.500 2l2.500 3M6.500 16l-2.500-3M6.500 16l2.500-3" stroke="#222" fill="none" stroke-width="1.2"/><rect x="10.500" y="12.500" width="6" height="3" fill="#eee" stroke="#777"/></svg>
<div style="left:884px;top:80.5px;width:25.5px;height:23.5px;background:#ebebeb;border:1px solid #c6c6c6;"></div>
<svg style="left:887px;top:83px;width:20px;height:19px" viewBox="0 0 20 19"><text x="2.500" y="12.500" font-size="12.500" font-family="Liberation Sans, sans-serif" fill="#222">f</text><text x="6.500" y="13" font-size="8.500" font-family="Liberation Sans, sans-serif" fill="#b33">(×)</text><path d="M19 14v4h-4z" fill="#333"/></svg>
<div style="left:914px;top:80.5px;width:25.5px;height:23.5px;background:#ebebeb;border:1px solid #c6c6c6;"></div>
<svg style="left:917px;top:83px;width:20px;height:19px" viewBox="0 0 20 19"><path d="M3 10.500l4.500-7.500l4.500 7.500z" fill="#eee" stroke="#b44"/><rect x="9.500" y="3.500" width="7" height="6" fill="#eee" stroke="#b44"/><circle cx="10" cy="12.500" r="3.500" fill="#eee" stroke="#b44"/><path d="M19 14v4h-4z" fill="#333"/></svg>
<div style="left:944px;top:80.5px;width:25.5px;height:23.5px;background:#ebebeb;border:1px solid #c6c6c6;"></div>
<svg style="left:947px;top:83px;width:20px;height:19px" viewBox="0 0 20 19"><path d="M3 8l12-6M3 8l13-2.500M3 8l12 1.500M3 8l3.500-3M3 8l4 1.500" stroke="#d33" fill="none" stroke-width="1"/><text x="3" y="17.500" font-size="8.500" font-weight="bold" font-family="Liberation Sans, sans-serif" fill="#222">GF</text><path d="M19 14v4h-4z" fill="#333"/></svg>
<div style="left:974px;top:80.5px;width:25.5px;height:23.5px;background:#ebebeb;border:1px solid #c6c6c6;"></div>
<svg style="left:977px;top:83px;width:20px;height:19px" viewBox="0 0 20 19"><rect x="3" y="3" width="14" height="13" rx="2" fill="#2a2a2a"/><path d="M5.500 6.500h4v3h-4zM11 7h4.500M11 9.500h4.500M5.500 12h10M5.500 14h10" stroke="#fff" stroke-width="1.2" fill="none"/></svg>
<div style="left:1014px;top:80.5px;width:25.5px;height:23.5px;background:#ebebeb;border:1px solid #c6c6c6;"></div>
<svg style="left:1017px;top:83px;width:20px;height:19px" viewBox="0 0 20 19"><rect x="8" y="2.500" width="3" height="3" fill="none" stroke="#c33" stroke-width="1.1"/><path d="M7 8.500h4v6h2v2h-7v-2h2.500v-4h-1.500z" fill="none" stroke="#c33" stroke-width="1.100"/></svg>
<div style="left:1044px;top:80.5px;width:25.5px;height:23.5px;background:#ebebeb;border:1px solid #c6c6c6;"></div>
<svg style="left:1047px;top:83px;width:20px;height:19px" viewBox="0 0 20 19"><path d="M6.500 1v11M1 6.500h11" stroke="#555" stroke-width="1"/><path d="M9 9l1.500 8l2-2.500l3.500 3l1-1.500l-3.500-2.500l2.500-1.500z" fill="#222"/></svg>
<div style="left:1084px;top:80.5px;width:25.5px;height:23.5px;background:#ebebeb;border:1px solid #c6c6c6;"></div>
<svg style="left:1087px;top:83px;width:20px;height:19px" viewBox="0 0 20 19"><rect x="2.500" y="2.500" width="15" height="14" rx="1.500" fill="#f6f6f6" stroke="#555"/><g><rect x="4.500" y="4.500" width="3" height="3" fill="#a33"/><rect x="8.500" y="4.500" width="3" height="3" fill="#e90"/><rect x="12.500" y="4.500" width="3" height="3" fill="#eb3"/><rect x="4.500" y="8.500" width="3" height="3" fill="#4a4"/><rect x="8.500" y="8.500" width="3" height="3" fill="#08a"/><rect x="12.500" y="8.500" width="3" height="3" fill="#16c"/><rect x="4.500" y="12.500" width="3" height="3" fill="#94b"/><rect x="8.500" y="12.500" width="3" height="3" fill="#666"/><rect x="12.500" y="12.500" width="3" height="3" fill="#111"/></g></svg>
<div style="left:1114px;top:80.5px;width:25.5px;height:23.5px;background:#ebebeb;border:1px solid #c6c6c6;"></div>
<svg style="left:1117px;top:83px;width:20px;height:19px" viewBox="0 0 20 19"><path d="M2.500 2.500h11l2.500 2.500v11h-13.500z" fill="#555" stroke="#333"/><rect x="5" y="3" width="7" height="4.500" fill="#eee"/><rect x="8.500" y="8.500" width="10" height="8" fill="#f4f4f4" stroke="#b44"/><path d="M11 15v-3M13.500 15v-4.500M16 15v-2.500" stroke="#b44" stroke-width="1.300"/></svg>
<div style="left:1144px;top:80.5px;width:25.5px;height:23.5px;background:#ebebeb;border:1px solid #c6c6c6;"></div>
<svg style="left:1147px;top:83px;width:20px;height:19px" viewBox="0 0 20 19"><rect x="2.500" y="2.500" width="16" height="14" rx="1" fill="#f4f4f4" stroke="#555" stroke-width="1.300"/><path d="M2.500 5.500h16" stroke="#555" stroke-width="1.500"/><rect x="5" y="8" width="3.500" height="6" fill="none" stroke="#555" stroke-width="1.200"/><path d="M10.500 8.500h6M10.500 13.500h6" stroke="#555" stroke-width="1.400"/></svg>
<svg class="clip" style="left:262px;top:110px;width:1655px;height:697.5px" viewBox="262 110 1655 697.5" font-family="'Liberation Sans', sans-serif" font-size="9"><rect x="262" y="110" width="1655" height="699" fill="#363636"/><path d="M281 110V784M304.7 110V784M328.4 110V784M352.09999999999997 110V784M375.79999999999995 110V784M399.49999999999994 110V784M423.19999999999993 110V784M446.8999999999999 110V784M470.5999999999999 110V784M494.2999999999999 110V784M517.9999999999999 110V784M541.6999999999999 110V784M565.4 110V784M589.1 110V784M612.8000000000001 110V784M636.5000000000001 110V784M660.2000000000002 110V784M683.9000000000002 110V784M707.6000000000003 110V784M731.3000000000003 110V784M755.0000000000003 110V784M778.7000000000004 110V784M802.4000000000004 110V784M826.1000000000005 110V784M849.8000000000005 110V784M873.5000000000006 110V784M897.2000000000006 110V784M920.9000000000007 110V784M944.6000000000007 110V784M968.3000000000008 110V784M992.0000000000008 110V784M1015.7000000000008 110V784M1039.4000000000008 110V784M1063.1000000000008 110V784M1086.8000000000009 110V784M1110.500000000001 110V784M1134.200000000001 110V784M1157.900000000001 110V784M1181.600000000001 110V784M1205.300000000001 110V784M1229.0000000000011 110V784M1252.7000000000012 110V784M1276.4000000000012 110V784M1300.1000000000013 110V784M1323.8000000000013 110V784M1347.5000000000014 110V784M1371.2000000000014 110V784M1394.9000000000015 110V784M1418.6000000000015 110V784M1442.3000000000015 110V784M1466.0000000000016 110V784M1489.7000000000016 110V784M1513.4000000000017 110V784M1537.1000000000017 110V784M1560.8000000000018 110V784M1584.5000000000018 110V784M1608.2000000000019 110V784M1631.900000000002 110V784M1655.600000000002 110V784M1679.300000000002 110V784M1703.000000000002 110V784M1726.700000000002 110V784M1750.4000000000021 110V784M1774.1000000000022 110V784M1797.8000000000022 110V784M1821.5000000000023 110V784M1845.2000000000023 110V784" stroke="#373737" stroke-width="3"/><path d="M353 110V784M653 110V784M953 110V784M1253 110V784M1553 110V784" stroke="#3c3c3c" stroke-width="2.5"/><path d="M262 114.5H1863.5M262 161.86H1863.5M262 209.22H1863.5M262 256.58H1863.5M262 303.94H1863.5M262 351.3H1863.5M262 398.66H1863.5M262 446.02H1863.5" stroke="#3b3b3b" stroke-width="1.2"/><path d="M262 474.5H1863.5" stroke="#777" stroke-width="1"/><path d="M262 577.5H1863.5" stroke="#777" stroke-width="1"/><path d="M262 680.5H1863.5" stroke="#777" stroke-width="1"/><path d="M1863.5 110V808" stroke="#8a8a8a" stroke-width="1"/><clipPath id="mc"><rect x="262" y="110" width="1601.5" height="364"/></clipPath><g clip-path="url(#mc)"><path d="M264.5 269.13V293.72" stroke="#3f82bb" stroke-width="1"/><rect x="263" y="269.13" width="3" height="24.59" fill="#3f82bb"/><path d="M269.5 275.28V298.33" stroke="#979797" stroke-width="1"/><rect x="268" y="275.28" width="3" height="23.06" fill="#979797"/><path d="M274.5 259.14V276.82" stroke="#979797" stroke-width="1"/><rect x="273" y="260.68" width="3" height="16.14" fill="#979797"/><path d="M279.5 261.44V272.2" stroke="#3f82bb" stroke-width="1"/><rect x="278" y="261.44" width="3" height="10.76" fill="#3f82bb"/><path d="M284.5 239.16V270.67" stroke="#979797" stroke-width="1"/><rect x="283" y="246.84" width="3" height="23.82" fill="#979797"/><path d="M289.5 229.17V256.83" stroke="#979797" stroke-width="1"/><rect x="288" y="238.39" width="3" height="9.22" fill="#979797"/><path d="M294.5 208.42V236.85" stroke="#979797" stroke-width="1"/><rect x="293" y="208.42" width="3" height="28.44" fill="#979797"/><path d="M299.5 207.65V224.56" stroke="#979797" stroke-width="1"/><rect x="298" y="208.42" width="3" height="1.2" fill="#979797"/><path d="M304.5 206.88V222.25" stroke="#3f82bb" stroke-width="1"/><rect x="303" y="206.88" width="3" height="15.37" fill="#3f82bb"/><path d="M309.5 219.18V239.93" stroke="#3f82bb" stroke-width="1"/><rect x="308" y="219.18" width="3" height="20.75" fill="#3f82bb"/><path d="M314.5 238.39V259.91" stroke="#3f82bb" stroke-width="1"/><rect x="313" y="238.39" width="3" height="21.52" fill="#3f82bb"/><path d="M319.5 245.31V258.37" stroke="#979797" stroke-width="1"/><rect x="318" y="245.31" width="3" height="13.06" fill="#979797"/><path d="M324.5 239.93V255.3" stroke="#3f82bb" stroke-width="1"/><rect x="323" y="239.93" width="3" height="15.37" fill="#3f82bb"/><path d="M329.5 248.38V256.83" stroke="#979797" stroke-width="1"/><rect x="328" y="251.92" width="3" height="1.2" fill="#979797"/><path d="M334.5 230.7V253.76" stroke="#979797" stroke-width="1"/><rect x="333" y="245.31" width="3" height="8.45" fill="#979797"/><path d="M339.5 234.55V246.07" stroke="#979797" stroke-width="1"/><rect x="338" y="238.39" width="3" height="7.69" fill="#979797"/><path d="M344.5 226.86V244.54" stroke="#979797" stroke-width="1"/><rect x="343" y="226.86" width="3" height="12.3" fill="#979797"/><path d="M349.5 226.86V237.62" stroke="#3f82bb" stroke-width="1"/><rect x="348" y="226.86" width="3" height="10.76" fill="#3f82bb"/><path d="M354.5 236.85V247.61" stroke="#3f82bb" stroke-width="1"/><rect x="353" y="236.85" width="3" height="1.84" fill="#3f82bb"/><path d="M359.5 239.16V252.22" stroke="#3f82bb" stroke-width="1"/><rect x="358" y="239.16" width="3" height="9.22" fill="#3f82bb"/><path d="M364.5 246.07V249.92" stroke="#979797" stroke-width="1"/><rect x="363" y="247.3" width="3" height="1.2" fill="#979797"/><path d="M369.5 236.08V247.61" stroke="#979797" stroke-width="1"/><rect x="368" y="236.08" width="3" height="11.53" fill="#979797"/><path d="M374.5 230.7V238.39" stroke="#3f82bb" stroke-width="1"/><rect x="373" y="230.7" width="3" height="7.69" fill="#3f82bb"/><path d="M379.5 229.17V238.39" stroke="#979797" stroke-width="1"/><rect x="378" y="229.17" width="3" height="9.22" fill="#979797"/><path d="M384.5 217.64V230.7" stroke="#979797" stroke-width="1"/><rect x="383" y="217.64" width="3" height="13.06" fill="#979797"/><path d="M389.5 216.1V227.63" stroke="#3f82bb" stroke-width="1"/><rect x="388" y="216.1" width="3" height="11.53" fill="#3f82bb"/><path d="M394.5 226.09V232.24" stroke="#979797" stroke-width="1"/><rect x="393" y="228.4" width="3" height="1.2" fill="#979797"/><path d="M399.5 226.09V249.92" stroke="#3f82bb" stroke-width="1"/><rect x="398" y="226.09" width="3" height="13.83" fill="#3f82bb"/><path d="M404.5 229.94V239.16" stroke="#979797" stroke-width="1"/><rect x="403" y="229.94" width="3" height="9.22" fill="#979797"/><path d="M409.5 219.18V230.7" stroke="#979797" stroke-width="1"/><rect x="408" y="219.18" width="3" height="11.53" fill="#979797"/><path d="M414.5 219.64V220.56" stroke="#979797" stroke-width="1"/><rect x="413" y="219.64" width="3" height="1.2" fill="#979797"/><path d="M419.5 220.71V232.24" stroke="#3f82bb" stroke-width="1"/><rect x="418" y="220.71" width="3" height="11.53" fill="#3f82bb"/><path d="M424.5 179.18V238.38" stroke="#979797" stroke-width="1"/><rect x="423" y="180.85" width="3" height="52.53" fill="#979797"/><path d="M429.5 178.35V201.69" stroke="#979797" stroke-width="1"/><rect x="428" y="179.68" width="3" height="2" fill="#979797"/><path d="M434.5 179.18V200.03" stroke="#3f82bb" stroke-width="1"/><rect x="433" y="180.02" width="3" height="8.34" fill="#3f82bb"/><path d="M439.5 183.35V214.2" stroke="#3f82bb" stroke-width="1"/><rect x="438" y="185.85" width="3" height="17.51" fill="#3f82bb"/><path d="M444.5 200.03V218.37" stroke="#3f82bb" stroke-width="1"/><rect x="443" y="200.86" width="3" height="6.67" fill="#3f82bb"/><path d="M449.5 205.86V225.87" stroke="#3f82bb" stroke-width="1"/><rect x="448" y="206.7" width="3" height="11.67" fill="#3f82bb"/><path d="M454.5 216.7V230.04" stroke="#3f82bb" stroke-width="1"/><rect x="453" y="218.03" width="3" height="10.34" fill="#3f82bb"/><path d="M459.5 216.7V232.54" stroke="#3f82bb" stroke-width="1"/><rect x="458" y="226.71" width="3" height="5" fill="#3f82bb"/><path d="M464.5 229.71V237.54" stroke="#3f82bb" stroke-width="1"/><rect x="463" y="230.87" width="3" height="5.84" fill="#3f82bb"/><path d="M469.5 220.87V241.71" stroke="#979797" stroke-width="1"/><rect x="468" y="221.7" width="3" height="14.17" fill="#979797"/><path d="M474.5 220.87V222.04" stroke="#979797" stroke-width="1"/><rect x="473" y="220.87" width="3" height="1.2" fill="#979797"/><path d="M479.5 198.36V222.54" stroke="#979797" stroke-width="1"/><rect x="478" y="198.36" width="3" height="24.18" fill="#979797"/><path d="M484.5 199.19V223.37" stroke="#3f82bb" stroke-width="1"/><rect x="483" y="199.19" width="3" height="24.18" fill="#3f82bb"/><path d="M489.5 202.53V223.37" stroke="#979797" stroke-width="1"/><rect x="488" y="202.53" width="3" height="20.84" fill="#979797"/><path d="M494.5 190.85V212.53" stroke="#3f82bb" stroke-width="1"/><rect x="493" y="201.36" width="3" height="1.67" fill="#3f82bb"/><path d="M499.5 193.36V201.69" stroke="#979797" stroke-width="1"/><rect x="498" y="197.52" width="3" height="4.17" fill="#979797"/><path d="M504.5 185.85V199.19" stroke="#979797" stroke-width="1"/><rect x="503" y="188.35" width="3" height="10.01" fill="#979797"/><path d="M509.5 185.85V189.69" stroke="#3f82bb" stroke-width="1"/><rect x="508" y="185.85" width="3" height="3.84" fill="#3f82bb"/><path d="M514.5 188.69V202.53" stroke="#3f82bb" stroke-width="1"/><rect x="513" y="189.19" width="3" height="10.01" fill="#3f82bb"/><path d="M519.5 198.02V200.86" stroke="#979797" stroke-width="1"/><rect x="518" y="198.86" width="3" height="1.67" fill="#979797"/><path d="M524.5 190.02V199.19" stroke="#979797" stroke-width="1"/><rect x="523" y="190.85" width="3" height="7.84" fill="#979797"/><path d="M529.5 181.68V203.36" stroke="#3f82bb" stroke-width="1"/><rect x="528" y="189.19" width="3" height="12.51" fill="#3f82bb"/><path d="M534.5 198.36V223.37" stroke="#3f82bb" stroke-width="1"/><rect x="533" y="200.86" width="3" height="21.68" fill="#3f82bb"/><path d="M539.5 220.87V232.54" stroke="#3f82bb" stroke-width="1"/><rect x="538" y="221.7" width="3" height="1.67" fill="#3f82bb"/><path d="M544.5 220.87V237.54" stroke="#3f82bb" stroke-width="1"/><rect x="543" y="221.7" width="3" height="8.34" fill="#3f82bb"/><path d="M549.5 212.53V233.38" stroke="#979797" stroke-width="1"/><rect x="548" y="220.04" width="3" height="10.01" fill="#979797"/><path d="M554.5 210.03V242.55" stroke="#979797" stroke-width="1"/><rect x="553" y="217.53" width="3" height="3.34" fill="#979797"/><path d="M559.5 216.7V235.88" stroke="#3f82bb" stroke-width="1"/><rect x="558" y="217.2" width="3" height="13.67" fill="#3f82bb"/><path d="M564.5 219.2V239.21" stroke="#3f82bb" stroke-width="1"/><rect x="563" y="226.71" width="3" height="5.84" fill="#3f82bb"/><path d="M569.5 219.2V232.54" stroke="#979797" stroke-width="1"/><rect x="568" y="219.2" width="3" height="13.34" fill="#979797"/><path d="M574.5 219.7V228.37" stroke="#3f82bb" stroke-width="1"/><rect x="573" y="220.04" width="3" height="4.17" fill="#3f82bb"/><path d="M579.5 204.19V225.04" stroke="#979797" stroke-width="1"/><rect x="578" y="206.7" width="3" height="15.01" fill="#979797"/><path d="M584.5 205.03V215.03" stroke="#979797" stroke-width="1"/><rect x="583" y="207.53" width="3" height="1.2" fill="#979797"/><path d="M589.5 206.7V209.2" stroke="#979797" stroke-width="1"/><rect x="588" y="208.03" width="3" height="1.2" fill="#979797"/><path d="M594.5 206.7V220.04" stroke="#3f82bb" stroke-width="1"/><rect x="593" y="208.03" width="3" height="2" fill="#3f82bb"/><path d="M599.5 207.53V222.54" stroke="#3f82bb" stroke-width="1"/><rect x="598" y="208.36" width="3" height="5.84" fill="#3f82bb"/><path d="M604.5 202.53V215.03" stroke="#979797" stroke-width="1"/><rect x="603" y="212.53" width="3" height="1.2" fill="#979797"/><path d="M609.5 210.03V225.04" stroke="#3f82bb" stroke-width="1"/><rect x="608" y="210.86" width="3" height="9.17" fill="#3f82bb"/><path d="M614.5 219.2V232.54" stroke="#3f82bb" stroke-width="1"/><rect x="613" y="219.2" width="3" height="13.34" fill="#3f82bb"/><path d="M619.5 218.03V233.38" stroke="#979797" stroke-width="1"/><rect x="618" y="219.2" width="3" height="13.34" fill="#979797"/><path d="M624.5 219.2V236.71" stroke="#3f82bb" stroke-width="1"/><rect x="623" y="219.7" width="3" height="12.01" fill="#3f82bb"/><path d="M629.5 219.2V238.38" stroke="#979797" stroke-width="1"/><rect x="628" y="221.7" width="3" height="10.84" fill="#979797"/><path d="M634.5 220.37V222.54" stroke="#979797" stroke-width="1"/><rect x="633" y="220.37" width="3" height="2.17" fill="#979797"/><path d="M639.5 220.04V236.71" stroke="#979797" stroke-width="1"/><rect x="638" y="220.04" width="3" height="1.2" fill="#979797"/><path d="M644.5 218.7V233.38" stroke="#3f82bb" stroke-width="1"/><rect x="643" y="219.2" width="3" height="10.84" fill="#3f82bb"/><path d="M649.5 230.87V262.56" stroke="#3f82bb" stroke-width="1"/><rect x="648" y="230.87" width="3" height="31.68" fill="#3f82bb"/><path d="M654.5 227.54V260.06" stroke="#979797" stroke-width="1"/><rect x="653" y="228.71" width="3" height="31.02" fill="#979797"/><path d="M659.5 225.87V245.88" stroke="#3f82bb" stroke-width="1"/><rect x="658" y="227.04" width="3" height="11.34" fill="#3f82bb"/><path d="M664.5 234.21V242.55" stroke="#979797" stroke-width="1"/><rect x="663" y="237.04" width="3" height="1.2" fill="#979797"/><path d="M669.5 238.04V238.71" stroke="#979797" stroke-width="1"/><rect x="668" y="238.04" width="3" height="1.2" fill="#979797"/><path d="M674.5 237.54V239.71" stroke="#3f82bb" stroke-width="1"/><rect x="673" y="237.54" width="3" height="2.17" fill="#3f82bb"/><path d="M679.5 237.04V250.05" stroke="#3f82bb" stroke-width="1"/><rect x="678" y="238.38" width="3" height="11.34" fill="#3f82bb"/><path d="M684.5 248.38V261.39" stroke="#979797" stroke-width="1"/><rect x="683" y="248.72" width="3" height="3" fill="#979797"/><path d="M689.5 246.72V249.72" stroke="#979797" stroke-width="1"/><rect x="688" y="246.72" width="3" height="3" fill="#979797"/><path d="M694.5 243.71V252.55" stroke="#979797" stroke-width="1"/><rect x="693" y="246.38" width="3" height="1.2" fill="#979797"/><path d="M699.5 242.05V248.38" stroke="#3f82bb" stroke-width="1"/><rect x="698" y="245.05" width="3" height="2.5" fill="#3f82bb"/><path d="M704.5 243.38V255.89" stroke="#3f82bb" stroke-width="1"/><rect x="703" y="247.05" width="3" height="8.34" fill="#3f82bb"/><path d="M709.5 243.38V255.89" stroke="#979797" stroke-width="1"/><rect x="708" y="253.05" width="3" height="2.33" fill="#979797"/><path d="M714.5 243.38V255.05" stroke="#979797" stroke-width="1"/><rect x="713" y="244.21" width="3" height="10.51" fill="#979797"/><path d="M719.5 239.21V245.05" stroke="#979797" stroke-width="1"/><rect x="718" y="242.55" width="3" height="2.17" fill="#979797"/><path d="M724.5 241.71V248.05" stroke="#3f82bb" stroke-width="1"/><rect x="723" y="244.71" width="3" height="2.83" fill="#3f82bb"/><path d="M729.5 238.38V251.72" stroke="#979797" stroke-width="1"/><rect x="728" y="245.88" width="3" height="1.2" fill="#979797"/><path d="M734.5 246.38V255.89" stroke="#3f82bb" stroke-width="1"/><rect x="733" y="246.38" width="3" height="9.5" fill="#3f82bb"/><path d="M739.5 250.05V258.39" stroke="#979797" stroke-width="1"/><rect x="738" y="250.05" width="3" height="8.34" fill="#979797"/><path d="M744.5 249.72V255.89" stroke="#3f82bb" stroke-width="1"/><rect x="743" y="249.72" width="3" height="6.17" fill="#3f82bb"/><path d="M749.5 252.06V255.39" stroke="#979797" stroke-width="1"/><rect x="748" y="252.06" width="3" height="3.34" fill="#979797"/><path d="M754.5 250.06V255.89" stroke="#979797" stroke-width="1"/><rect x="753" y="250.06" width="3" height="5.84" fill="#979797"/><path d="M759.5 250.06V255.06" stroke="#3f82bb" stroke-width="1"/><rect x="758" y="250.06" width="3" height="5" fill="#3f82bb"/><path d="M764.5 248.39V255.06" stroke="#979797" stroke-width="1"/><rect x="763" y="248.39" width="3" height="6.67" fill="#979797"/><path d="M769.5 244.22V248.05" stroke="#979797" stroke-width="1"/><rect x="768" y="244.22" width="3" height="3.84" fill="#979797"/><path d="M774.5 205.87V245.89" stroke="#979797" stroke-width="1"/><rect x="773" y="205.87" width="3" height="40.02" fill="#979797"/><path d="M779.5 200.03V212.54" stroke="#3f82bb" stroke-width="1"/><rect x="778" y="205.87" width="3" height="5.84" fill="#3f82bb"/><path d="M784.5 209.2V245.89" stroke="#3f82bb" stroke-width="1"/><rect x="783" y="210.04" width="3" height="31.68" fill="#3f82bb"/><path d="M789.5 228.38V241.72" stroke="#979797" stroke-width="1"/><rect x="788" y="228.38" width="3" height="13.34" fill="#979797"/><path d="M794.5 229.21V230.38" stroke="#979797" stroke-width="1"/><rect x="793" y="229.21" width="3" height="1.2" fill="#979797"/><path d="M799.5 225.88V230.88" stroke="#979797" stroke-width="1"/><rect x="798" y="225.88" width="3" height="5" fill="#979797"/><path d="M804.5 210.04V222.54" stroke="#979797" stroke-width="1"/><rect x="803" y="210.87" width="3" height="10.84" fill="#979797"/><path d="M809.5 207.53V218.37" stroke="#979797" stroke-width="1"/><rect x="808" y="207.53" width="3" height="4.17" fill="#979797"/><path d="M814.5 189.19V211.7" stroke="#979797" stroke-width="1"/><rect x="813" y="196.7" width="3" height="10.84" fill="#979797"/><path d="M819.5 199.2V210.04" stroke="#979797" stroke-width="1"/><rect x="818" y="200.03" width="3" height="1.2" fill="#979797"/><path d="M824.5 183.02V196.7" stroke="#979797" stroke-width="1"/><rect x="823" y="183.02" width="3" height="13.67" fill="#979797"/><path d="M829.5 178.35V210.04" stroke="#3f82bb" stroke-width="1"/><rect x="828" y="180.02" width="3" height="30.02" fill="#3f82bb"/><path d="M834.5 196.7V210.04" stroke="#979797" stroke-width="1"/><rect x="833" y="198.36" width="3" height="11.67" fill="#979797"/><path d="M839.5 193.03V199.7" stroke="#979797" stroke-width="1"/><rect x="838" y="193.03" width="3" height="6.67" fill="#979797"/><path d="M844.5 190.86V195.86" stroke="#979797" stroke-width="1"/><rect x="843" y="192.03" width="3" height="3" fill="#979797"/><path d="M849.5 185.02V193.36" stroke="#979797" stroke-width="1"/><rect x="848" y="191.69" width="3" height="1.33" fill="#979797"/><path d="M854.5 175.85V202.53" stroke="#3f82bb" stroke-width="1"/><rect x="853" y="189.19" width="3" height="11.67" fill="#3f82bb"/><path d="M859.5 192.03V198.03" stroke="#979797" stroke-width="1"/><rect x="858" y="192.03" width="3" height="6" fill="#979797"/><path d="M864.5 188.36V199.7" stroke="#979797" stroke-width="1"/><rect x="863" y="190.03" width="3" height="3.34" fill="#979797"/><path d="M869.5 187.52V200.36" stroke="#3f82bb" stroke-width="1"/><rect x="868" y="190.86" width="3" height="7.5" fill="#3f82bb"/><path d="M874.5 169.18V199.7" stroke="#979797" stroke-width="1"/><rect x="873" y="169.18" width="3" height="30.52" fill="#979797"/><path d="M879.5 160.84V173.35" stroke="#3f82bb" stroke-width="1"/><rect x="878" y="168.68" width="3" height="4.34" fill="#3f82bb"/><path d="M884.5 172.52V185.02" stroke="#3f82bb" stroke-width="1"/><rect x="883" y="173.02" width="3" height="10.01" fill="#3f82bb"/><path d="M889.5 179.69V189.19" stroke="#3f82bb" stroke-width="1"/><rect x="888" y="180.02" width="3" height="5" fill="#3f82bb"/><path d="M894.5 180.85V195.03" stroke="#3f82bb" stroke-width="1"/><rect x="893" y="183.69" width="3" height="9.34" fill="#3f82bb"/><path d="M899.5 178.35V190.86" stroke="#979797" stroke-width="1"/><rect x="898" y="180.85" width="3" height="10.01" fill="#979797"/><path d="M904.5 170.85V202.53" stroke="#3f82bb" stroke-width="1"/><rect x="903" y="179.19" width="3" height="22.51" fill="#3f82bb"/><path d="M909.5 200.86V222.54" stroke="#3f82bb" stroke-width="1"/><rect x="908" y="201.36" width="3" height="17.01" fill="#3f82bb"/><path d="M914.5 193.36V230.88" stroke="#979797" stroke-width="1"/><rect x="913" y="194.19" width="3" height="25.85" fill="#979797"/><path d="M919.5 191.69V202.53" stroke="#3f82bb" stroke-width="1"/><rect x="918" y="193.03" width="3" height="3.67" fill="#3f82bb"/><path d="M924.5 195.86V226.71" stroke="#3f82bb" stroke-width="1"/><rect x="923" y="195.86" width="3" height="30.85" fill="#3f82bb"/><path d="M929.5 218.37V253.39" stroke="#3f82bb" stroke-width="1"/><rect x="928" y="223.38" width="3" height="27.51" fill="#3f82bb"/><path d="M934.5 233.38V252.56" stroke="#979797" stroke-width="1"/><rect x="933" y="235.88" width="3" height="15.51" fill="#979797"/><path d="M939.5 206.7V241.72" stroke="#979797" stroke-width="1"/><rect x="938" y="206.7" width="3" height="29.18" fill="#979797"/><path d="M944.5 207.53V235.88" stroke="#3f82bb" stroke-width="1"/><rect x="943" y="208.37" width="3" height="17.51" fill="#3f82bb"/><path d="M949.5 177V263.5" stroke="#3f82bb" stroke-width="1"/><rect x="948" y="224.6" width="3" height="19.4" fill="#3f82bb"/><path d="M954.5 177V472" stroke="#979797" stroke-width="1"/><rect x="953" y="189" width="3" height="76" fill="#979797"/><path d="M959.5 118.6V400" stroke="#3f82bb" stroke-width="1"/><rect x="958" y="187.5" width="3" height="197.9" fill="#3f82bb"/><path d="M964.5 369.5V389" stroke="#979797" stroke-width="1"/><rect x="963" y="369.5" width="3" height="19.5" fill="#979797"/><path d="M969.5 374.8V399.5" stroke="#3f82bb" stroke-width="1"/><rect x="968" y="374.8" width="3" height="24.7" fill="#3f82bb"/><path d="M974.5 372V395" stroke="#3f82bb" stroke-width="1"/><rect x="973" y="372" width="3" height="23" fill="#3f82bb"/><path d="M979.5 371.3V397.8" stroke="#979797" stroke-width="1"/><rect x="978" y="371.3" width="3" height="26.5" fill="#979797"/><path d="M984.5 369.5V385.4" stroke="#3f82bb" stroke-width="1"/><rect x="983" y="369.5" width="3" height="15.9" fill="#3f82bb"/><path d="M989.5 383.6V394.2" stroke="#3f82bb" stroke-width="1"/><rect x="988" y="383.6" width="3" height="10.6" fill="#3f82bb"/><path d="M994.5 366V394.2" stroke="#979797" stroke-width="1"/><rect x="993" y="366" width="3" height="28.2" fill="#979797"/><path d="M999.5 275.8V367.7" stroke="#979797" stroke-width="1"/><rect x="998" y="360.7" width="3" height="7" fill="#979797"/><path d="M1004.5 360.7V394.2" stroke="#3f82bb" stroke-width="1"/><rect x="1003" y="360.7" width="3" height="33.5" fill="#3f82bb"/><path d="M1009.5 394.2V410.1" stroke="#3f82bb" stroke-width="1"/><rect x="1008" y="394.2" width="3" height="15.9" fill="#3f82bb"/><path d="M1014.5 410.1V429.6" stroke="#3f82bb" stroke-width="1"/><rect x="1013" y="410.1" width="3" height="19.5" fill="#3f82bb"/><path d="M1019.5 426V449" stroke="#3f82bb" stroke-width="1"/><rect x="1018" y="426" width="3" height="23" fill="#3f82bb"/><path d="M1024.5 429.6V449" stroke="#979797" stroke-width="1"/><rect x="1023" y="429.6" width="3" height="19.4" fill="#979797"/><path d="M1029.5 420.7V431.3" stroke="#979797" stroke-width="1"/><rect x="1028" y="420.7" width="3" height="10.6" fill="#979797"/><path d="M1034.5 419V433" stroke="#3f82bb" stroke-width="1"/><rect x="1033" y="419" width="3" height="14" fill="#3f82bb"/><path d="M1039.5 374.8V433" stroke="#979797" stroke-width="1"/><rect x="1038" y="374.8" width="3" height="58.2" fill="#979797"/><path d="M1044.5 316.5V378.3" stroke="#979797" stroke-width="1"/><rect x="1043" y="316.5" width="3" height="61.8" fill="#979797"/><path d="M1049.5 204.3V314.7" stroke="#979797" stroke-width="1"/><rect x="1048" y="276" width="3" height="38.7" fill="#979797"/><path d="M1054.5 203.4V290" stroke="#979797" stroke-width="1"/><rect x="1053" y="258" width="3" height="18" fill="#979797"/><path d="M1059.5 254.6V300.6" stroke="#3f82bb" stroke-width="1"/><rect x="1058" y="254.6" width="3" height="46" fill="#3f82bb"/><path d="M1064.5 309.4V366" stroke="#3f82bb" stroke-width="1"/><rect x="1063" y="309.4" width="3" height="56.6" fill="#3f82bb"/><path d="M1069.5 328.9V406.6" stroke="#979797" stroke-width="1"/><rect x="1068" y="328.9" width="3" height="22.9" fill="#979797"/><path d="M1074.5 325.49V348.42" stroke="#3f82bb" stroke-width="1"/><rect x="1073" y="325.49" width="3" height="22.93" fill="#3f82bb"/><path d="M1079.5 344.25V371.34" stroke="#3f82bb" stroke-width="1"/><rect x="1078" y="344.25" width="3" height="27.1" fill="#3f82bb"/><path d="M1084.5 358.84V375.51" stroke="#979797" stroke-width="1"/><rect x="1083" y="358.84" width="3" height="16.68" fill="#979797"/><path d="M1089.5 354.67V392.19" stroke="#3f82bb" stroke-width="1"/><rect x="1088" y="354.67" width="3" height="37.52" fill="#3f82bb"/><path d="M1094.5 363.01V393.23" stroke="#979797" stroke-width="1"/><rect x="1093" y="363.01" width="3" height="30.22" fill="#979797"/><path d="M1099.5 335.91V354.67" stroke="#979797" stroke-width="1"/><rect x="1098" y="335.91" width="3" height="18.76" fill="#979797"/><path d="M1104.5 306.73V340.08" stroke="#979797" stroke-width="1"/><rect x="1103" y="306.73" width="3" height="33.35" fill="#979797"/><path d="M1109.5 315.07V335.91" stroke="#979797" stroke-width="1"/><rect x="1108" y="315.07" width="3" height="20.84" fill="#979797"/><path d="M1114.5 333.82V350.5" stroke="#3f82bb" stroke-width="1"/><rect x="1113" y="333.82" width="3" height="16.68" fill="#3f82bb"/><path d="M1119.5 346.33V371.34" stroke="#3f82bb" stroke-width="1"/><rect x="1118" y="346.33" width="3" height="25.01" fill="#3f82bb"/><path d="M1124.5 348.42V373.43" stroke="#979797" stroke-width="1"/><rect x="1123" y="348.42" width="3" height="25.01" fill="#979797"/><path d="M1129.5 350.5V383.85" stroke="#3f82bb" stroke-width="1"/><rect x="1128" y="350.5" width="3" height="33.35" fill="#3f82bb"/><path d="M1134.5 369.26V398.44" stroke="#979797" stroke-width="1"/><rect x="1133" y="369.26" width="3" height="12.51" fill="#979797"/><path d="M1139.5 358.84V377.6" stroke="#979797" stroke-width="1"/><rect x="1138" y="358.84" width="3" height="18.76" fill="#979797"/><path d="M1144.5 348.42V363.01" stroke="#979797" stroke-width="1"/><rect x="1143" y="348.42" width="3" height="14.59" fill="#979797"/><path d="M1149.5 333.82V365.09" stroke="#979797" stroke-width="1"/><rect x="1148" y="333.82" width="3" height="22.93" fill="#979797"/><path d="M1154.5 298.39V348.42" stroke="#979797" stroke-width="1"/><rect x="1153" y="298.39" width="3" height="50.03" fill="#979797"/><path d="M1159.5 290.05V315.07" stroke="#3f82bb" stroke-width="1"/><rect x="1158" y="290.05" width="3" height="25.01" fill="#3f82bb"/><path d="M1164.5 312.98V335.91" stroke="#3f82bb" stroke-width="1"/><rect x="1163" y="312.98" width="3" height="22.93" fill="#3f82bb"/><path d="M1169.5 331.74V346.33" stroke="#3f82bb" stroke-width="1"/><rect x="1168" y="331.74" width="3" height="14.59" fill="#3f82bb"/><path d="M1174.5 323.4V335.91" stroke="#979797" stroke-width="1"/><rect x="1173" y="323.4" width="3" height="12.51" fill="#979797"/><path d="M1179.5 321.32V335.91" stroke="#979797" stroke-width="1"/><rect x="1178" y="327.57" width="3" height="1.67" fill="#979797"/><path d="M1184.5 279.63V323.4" stroke="#979797" stroke-width="1"/><rect x="1183" y="302.56" width="3" height="20.84" fill="#979797"/><path d="M1189.5 306.73V315.07" stroke="#979797" stroke-width="1"/><rect x="1188" y="306.73" width="3" height="8.34" fill="#979797"/><path d="M1194.5 308.81V323.4" stroke="#3f82bb" stroke-width="1"/><rect x="1193" y="308.81" width="3" height="14.59" fill="#3f82bb"/><path d="M1199.5 306.73V315.07" stroke="#979797" stroke-width="1"/><rect x="1198" y="306.73" width="3" height="8.34" fill="#979797"/><path d="M1204.5 302.56V323.4" stroke="#3f82bb" stroke-width="1"/><rect x="1203" y="302.56" width="3" height="20.84" fill="#3f82bb"/><path d="M1209.5 321.32V350.5" stroke="#3f82bb" stroke-width="1"/><rect x="1208" y="321.32" width="3" height="29.18" fill="#3f82bb"/><path d="M1214.5 335.91V360.92" stroke="#3f82bb" stroke-width="1"/><rect x="1213" y="335.91" width="3" height="20.84" fill="#3f82bb"/><path d="M1219.5 335.91V354.67" stroke="#979797" stroke-width="1"/><rect x="1218" y="335.91" width="3" height="18.76" fill="#979797"/><path d="M1224.5 323.4V335.91" stroke="#979797" stroke-width="1"/><rect x="1223" y="323.4" width="3" height="12.51" fill="#979797"/><path d="M1229.5 294.22V323.4" stroke="#979797" stroke-width="1"/><rect x="1228" y="304.64" width="3" height="18.76" fill="#979797"/><path d="M1234.5 283.8V315.07" stroke="#979797" stroke-width="1"/><rect x="1233" y="283.8" width="3" height="31.27" fill="#979797"/><path d="M1239.5 231.69V294.22" stroke="#979797" stroke-width="1"/><rect x="1238" y="237.94" width="3" height="56.28" fill="#979797"/><path d="M1244.5 193.13V240.03" stroke="#979797" stroke-width="1"/><rect x="1243" y="200.42" width="3" height="39.6" fill="#979797"/><path d="M1249.5 190V235.86" stroke="#3f82bb" stroke-width="1"/><rect x="1248" y="200.42" width="3" height="35.44" fill="#3f82bb"/><path d="M1254.5 235.86V281.71" stroke="#3f82bb" stroke-width="1"/><rect x="1253" y="235.86" width="3" height="35.44" fill="#3f82bb"/><path d="M1259.5 246.28V273.38" stroke="#979797" stroke-width="1"/><rect x="1258" y="256.7" width="3" height="16.68" fill="#979797"/><path d="M1264.5 250.45V260.87" stroke="#979797" stroke-width="1"/><rect x="1263" y="250.45" width="3" height="10.42" fill="#979797"/><path d="M1269.5 223.35V252.53" stroke="#979797" stroke-width="1"/><rect x="1268" y="237.94" width="3" height="14.59" fill="#979797"/><path d="M1274.5 231.69V267.12" stroke="#3f82bb" stroke-width="1"/><rect x="1273" y="236.9" width="3" height="30.22" fill="#3f82bb"/><path d="M1279.5 262.95V277.55" stroke="#3f82bb" stroke-width="1"/><rect x="1278" y="262.95" width="3" height="14.59" fill="#3f82bb"/><path d="M1284.5 281.71V317.15" stroke="#3f82bb" stroke-width="1"/><rect x="1283" y="281.71" width="3" height="35.44" fill="#3f82bb"/><path d="M1289.5 306.73V327.57" stroke="#3f82bb" stroke-width="1"/><rect x="1288" y="312.98" width="3" height="14.59" fill="#3f82bb"/><path d="M1294.5 315.07V340.08" stroke="#979797" stroke-width="1"/><rect x="1293" y="321.32" width="3" height="6.25" fill="#979797"/><path d="M1299.5 321.32V331.74" stroke="#979797" stroke-width="1"/><rect x="1298" y="324.45" width="3" height="1.2" fill="#979797"/><path d="M1304.5 306.73V325.49" stroke="#979797" stroke-width="1"/><rect x="1303" y="324.45" width="3" height="1.2" fill="#979797"/><path d="M1309.5 290.05V335.91" stroke="#979797" stroke-width="1"/><rect x="1308" y="296.31" width="3" height="27.1" fill="#979797"/><path d="M1314.5 296.31V319.23" stroke="#3f82bb" stroke-width="1"/><rect x="1313" y="296.31" width="3" height="12.51" fill="#3f82bb"/><path d="M1319.5 277.55V308.81" stroke="#979797" stroke-width="1"/><rect x="1318" y="277.55" width="3" height="31.27" fill="#979797"/><path d="M1324.5 222.31V279.63" stroke="#979797" stroke-width="1"/><rect x="1323" y="244.19" width="3" height="35.44" fill="#979797"/><path d="M1329.5 242.11V279.63" stroke="#3f82bb" stroke-width="1"/><rect x="1328" y="242.11" width="3" height="37.52" fill="#3f82bb"/><path d="M1334.5 261.91V279.63" stroke="#979797" stroke-width="1"/><rect x="1333" y="268.17" width="3" height="11.46" fill="#979797"/><path d="M1339.5 270.25V306.73" stroke="#3f82bb" stroke-width="1"/><rect x="1338" y="270.25" width="3" height="28.14" fill="#3f82bb"/><path d="M1344.5 250.45V287.97" stroke="#979797" stroke-width="1"/><rect x="1343" y="250.45" width="3" height="37.52" fill="#979797"/><path d="M1349.5 238.98V258.79" stroke="#979797" stroke-width="1"/><rect x="1348" y="245.24" width="3" height="6.25" fill="#979797"/><path d="M1354.5 240.03V270.25" stroke="#3f82bb" stroke-width="1"/><rect x="1353" y="246.28" width="3" height="23.97" fill="#3f82bb"/><path d="M1359.5 256.7V276.5" stroke="#3f82bb" stroke-width="1"/><rect x="1358" y="269.21" width="3" height="7.3" fill="#3f82bb"/><path d="M1364.5 273.38V290.05" stroke="#3f82bb" stroke-width="1"/><rect x="1363" y="279.63" width="3" height="5.21" fill="#3f82bb"/><path d="M1369.5 267.12V283.8" stroke="#979797" stroke-width="1"/><rect x="1368" y="275.46" width="3" height="8.34" fill="#979797"/><path d="M1374.5 256.7V276.5" stroke="#979797" stroke-width="1"/><rect x="1373" y="262.95" width="3" height="13.55" fill="#979797"/><path d="M1379.5 233.77V278.59" stroke="#3f82bb" stroke-width="1"/><rect x="1378" y="262.95" width="3" height="15.63" fill="#3f82bb"/><path d="M1384.5 230.65V279.63" stroke="#979797" stroke-width="1"/><rect x="1383" y="231.69" width="3" height="44.82" fill="#979797"/><path d="M1389.5 215.01V231.69" stroke="#979797" stroke-width="1"/><rect x="1388" y="215.01" width="3" height="16.68" fill="#979797"/><path d="M1394.5 210.84V237.94" stroke="#3f82bb" stroke-width="1"/><rect x="1393" y="210.84" width="3" height="27.1" fill="#3f82bb"/><path d="M1399.5 225.44V237.94" stroke="#3f82bb" stroke-width="1"/><rect x="1398" y="225.44" width="3" height="12.51" fill="#3f82bb"/><path d="M1404.5 227.52V246.28" stroke="#3f82bb" stroke-width="1"/><rect x="1403" y="227.52" width="3" height="18.76" fill="#3f82bb"/><path d="M1409.5 231.69V256.7" stroke="#979797" stroke-width="1"/><rect x="1408" y="231.69" width="3" height="18.76" fill="#979797"/><path d="M1414.5 221.27V233.77" stroke="#979797" stroke-width="1"/><rect x="1413" y="221.27" width="3" height="12.51" fill="#979797"/><path d="M1419.5 208.76V225.44" stroke="#979797" stroke-width="1"/><rect x="1418" y="208.76" width="3" height="16.68" fill="#979797"/><path d="M1424.5 217.1V231.69" stroke="#3f82bb" stroke-width="1"/><rect x="1423" y="217.1" width="3" height="14.59" fill="#3f82bb"/><path d="M1429.5 213.97V252.53" stroke="#3f82bb" stroke-width="1"/><rect x="1428" y="213.97" width="3" height="38.56" fill="#3f82bb"/><path d="M1434.5 246.28V256.7" stroke="#3f82bb" stroke-width="1"/><rect x="1433" y="246.28" width="3" height="10.42" fill="#3f82bb"/><path d="M1439.5 242.11V260.87" stroke="#979797" stroke-width="1"/><rect x="1438" y="242.11" width="3" height="8.34" fill="#979797"/><path d="M1444.5 227.52V244.19" stroke="#979797" stroke-width="1"/><rect x="1443" y="227.52" width="3" height="16.68" fill="#979797"/><path d="M1449.5 226.48V237.94" stroke="#979797" stroke-width="1"/><rect x="1448" y="226.48" width="3" height="11.46" fill="#979797"/><path d="M1454.5 209.8V227.52" stroke="#979797" stroke-width="1"/><rect x="1453" y="209.8" width="3" height="17.72" fill="#979797"/><path d="M1459.5 221.27V240.03" stroke="#3f82bb" stroke-width="1"/><rect x="1458" y="221.27" width="3" height="18.76" fill="#3f82bb"/><path d="M1464.5 230.92V239.5" stroke="#979797" stroke-width="1"/><rect x="1463" y="230.92" width="3" height="8.58" fill="#979797"/><path d="M1469.5 227.92V247.8" stroke="#3f82bb" stroke-width="1"/><rect x="1468" y="229.59" width="3" height="18.11" fill="#3f82bb"/><path d="M1474.5 246.85V267.87" stroke="#3f82bb" stroke-width="1"/><rect x="1473" y="247.48" width="3" height="14.7" fill="#3f82bb"/><path d="M1479.5 245.13V262.7" stroke="#979797" stroke-width="1"/><rect x="1478" y="245.13" width="3" height="17.28" fill="#979797"/><path d="M1484.5 258.36V292.55" stroke="#979797" stroke-width="1"/><rect x="1483" y="271.7" width="3" height="5" fill="#979797"/><path d="M1489.5 264.2V334.23" stroke="#3f82bb" stroke-width="1"/><rect x="1488" y="273.37" width="3" height="58.36" fill="#3f82bb"/><path d="M1494.5 314.22V335.9" stroke="#979797" stroke-width="1"/><rect x="1493" y="315.89" width="3" height="16.68" fill="#979797"/><path d="M1499.5 315.06V316.22" stroke="#979797" stroke-width="1"/><rect x="1498" y="315.06" width="3" height="1.2" fill="#979797"/><path d="M1504.5 304.22V316.39" stroke="#979797" stroke-width="1"/><rect x="1503" y="312.56" width="3" height="3.34" fill="#979797"/><path d="M1509.5 310.06V321.73" stroke="#3f82bb" stroke-width="1"/><rect x="1508" y="311.39" width="3" height="9.5" fill="#3f82bb"/><path d="M1514.5 320.06V347.57" stroke="#3f82bb" stroke-width="1"/><rect x="1513" y="320.89" width="3" height="25.85" fill="#3f82bb"/><path d="M1519.5 342.57V360.08" stroke="#3f82bb" stroke-width="1"/><rect x="1518" y="345.07" width="3" height="2.5" fill="#3f82bb"/><path d="M1524.5 345.07V370.09" stroke="#3f82bb" stroke-width="1"/><rect x="1523" y="345.91" width="3" height="19.18" fill="#3f82bb"/><path d="M1529.5 348.91V358.41" stroke="#979797" stroke-width="1"/><rect x="1528" y="348.91" width="3" height="9.5" fill="#979797"/><path d="M1534.5 320.06V348.41" stroke="#979797" stroke-width="1"/><rect x="1533" y="320.06" width="3" height="28.35" fill="#979797"/><path d="M1539.5 319.23V327.56" stroke="#3f82bb" stroke-width="1"/><rect x="1538" y="320.06" width="3" height="3.34" fill="#3f82bb"/><path d="M1544.5 315.89V325.9" stroke="#979797" stroke-width="1"/><rect x="1543" y="316.39" width="3" height="6.17" fill="#979797"/><path d="M1549.5 290.05V318.39" stroke="#979797" stroke-width="1"/><rect x="1548" y="298.38" width="3" height="19.18" fill="#979797"/><path d="M1554.5 294.21V337.07" stroke="#3f82bb" stroke-width="1"/><rect x="1553" y="295.05" width="3" height="41.69" fill="#3f82bb"/><path d="M1559.5 306.72V338.4" stroke="#979797" stroke-width="1"/><rect x="1558" y="310.89" width="3" height="26.68" fill="#979797"/><path d="M1564.5 305.05V310.89" stroke="#979797" stroke-width="1"/><rect x="1563" y="305.05" width="3" height="5.84" fill="#979797"/><path d="M1569.5 301.72V311.72" stroke="#3f82bb" stroke-width="1"/><rect x="1568" y="303.72" width="3" height="3.84" fill="#3f82bb"/><path d="M1574.5 295.05V307.55" stroke="#979797" stroke-width="1"/><rect x="1573" y="295.05" width="3" height="12.51" fill="#979797"/><path d="M1579.5 295.38V298.38" stroke="#3f82bb" stroke-width="1"/><rect x="1578" y="295.38" width="3" height="3" fill="#3f82bb"/><path d="M1584.5 297.55V310.06" stroke="#3f82bb" stroke-width="1"/><rect x="1583" y="298.38" width="3" height="9.17" fill="#3f82bb"/><path d="M1589.5 307.55V325.9" stroke="#3f82bb" stroke-width="1"/><rect x="1588" y="308.39" width="3" height="5.84" fill="#3f82bb"/><path d="M1594.5 305.05V321.73" stroke="#979797" stroke-width="1"/><rect x="1593" y="310.06" width="3" height="2.5" fill="#979797"/><path d="M1599.5 293.38V310.89" stroke="#979797" stroke-width="1"/><rect x="1598" y="303.39" width="3" height="7" fill="#979797"/><path d="M1604.5 298.38V310.06" stroke="#979797" stroke-width="1"/><rect x="1603" y="300.88" width="3" height="1.67" fill="#979797"/><path d="M1609.5 299.72V306.72" stroke="#3f82bb" stroke-width="1"/><rect x="1608" y="299.72" width="3" height="7" fill="#3f82bb"/><path d="M1614.5 306.72V321.73" stroke="#3f82bb" stroke-width="1"/><rect x="1613" y="306.72" width="3" height="15.01" fill="#3f82bb"/><path d="M1619.5 321.39V326.73" stroke="#3f82bb" stroke-width="1"/><rect x="1618" y="321.39" width="3" height="5.34" fill="#3f82bb"/><path d="M1624.5 310.89V329.23" stroke="#979797" stroke-width="1"/><rect x="1623" y="312.56" width="3" height="15.84" fill="#979797"/><path d="M1629.5 290.05V314.22" stroke="#979797" stroke-width="1"/><rect x="1628" y="299.22" width="3" height="14.17" fill="#979797"/><path d="M1634.5 297.55V307.55" stroke="#3f82bb" stroke-width="1"/><rect x="1633" y="299.22" width="3" height="6.67" fill="#3f82bb"/><path d="M1639.5 304.22V305.05" stroke="#979797" stroke-width="1"/><rect x="1638" y="304.22" width="3" height="1.2" fill="#979797"/><path d="M1644.5 299.22V305.39" stroke="#979797" stroke-width="1"/><rect x="1643" y="302.05" width="3" height="3" fill="#979797"/><path d="M1649.5 297.22V302.55" stroke="#979797" stroke-width="1"/><rect x="1648" y="297.55" width="3" height="3.34" fill="#979797"/><path d="M1654.5 288.38V298.38" stroke="#979797" stroke-width="1"/><rect x="1653" y="288.38" width="3" height="10.01" fill="#979797"/><path d="M1659.5 254.19V287.54" stroke="#979797" stroke-width="1"/><rect x="1658" y="254.19" width="3" height="33.35" fill="#979797"/><path d="M1664.5 228.01V255.53" stroke="#979797" stroke-width="1"/><rect x="1663" y="228.01" width="3" height="27.51" fill="#979797"/><path d="M1669.5 227.51V237.52" stroke="#3f82bb" stroke-width="1"/><rect x="1668" y="228.35" width="3" height="7.5" fill="#3f82bb"/><path d="M1674.5 235.02V248.36" stroke="#3f82bb" stroke-width="1"/><rect x="1673" y="238.35" width="3" height="5.84" fill="#3f82bb"/><path d="M1679.5 221.68V244.19" stroke="#979797" stroke-width="1"/><rect x="1678" y="235.02" width="3" height="8.67" fill="#979797"/><path d="M1684.5 215.01V237.52" stroke="#979797" stroke-width="1"/><rect x="1683" y="223.35" width="3" height="11.67" fill="#979797"/><path d="M1689.5 224.18V232.52" stroke="#3f82bb" stroke-width="1"/><rect x="1688" y="225.01" width="3" height="2.5" fill="#3f82bb"/><path d="M1694.5 231.68V240.02" stroke="#3f82bb" stroke-width="1"/><rect x="1693" y="232.52" width="3" height="6.67" fill="#3f82bb"/><path d="M1699.5 237.52V241.69" stroke="#979797" stroke-width="1"/><rect x="1698" y="238.35" width="3" height="1.33" fill="#979797"/><path d="M1704.5 239.52V240.35" stroke="#979797" stroke-width="1"/><rect x="1703" y="239.52" width="3" height="1.2" fill="#979797"/><path d="M1709.5 240.52V243.36" stroke="#3f82bb" stroke-width="1"/><rect x="1708" y="240.52" width="3" height="2.83" fill="#3f82bb"/><path d="M1714.5 242.52V252.53" stroke="#3f82bb" stroke-width="1"/><rect x="1713" y="242.52" width="3" height="10.01" fill="#3f82bb"/><path d="M1719.5 252.53V268.37" stroke="#3f82bb" stroke-width="1"/><rect x="1718" y="252.53" width="3" height="15.84" fill="#3f82bb"/><path d="M1724.5 265.87V270.87" stroke="#979797" stroke-width="1"/><rect x="1723" y="266.37" width="3" height="1.2" fill="#979797"/><path d="M1729.5 261.36V265.87" stroke="#979797" stroke-width="1"/><rect x="1728" y="262.03" width="3" height="3.34" fill="#979797"/><path d="M1734.5 262.53V265.87" stroke="#979797" stroke-width="1"/><rect x="1733" y="263.03" width="3" height="1.2" fill="#979797"/><path d="M1739.5 238.69V261.36" stroke="#979797" stroke-width="1"/><rect x="1738" y="238.69" width="3" height="22.68" fill="#979797"/><path d="M1744.5 233.35V239.69" stroke="#979797" stroke-width="1"/><rect x="1743" y="235.02" width="3" height="4.17" fill="#979797"/><path d="M1749.5 235.02V254.19" stroke="#3f82bb" stroke-width="1"/><rect x="1748" y="235.85" width="3" height="13.34" fill="#3f82bb"/><path d="M1754.5 240.85V254.19" stroke="#979797" stroke-width="1"/><rect x="1753" y="241.35" width="3" height="7.84" fill="#979797"/><path d="M1759.5 234.18V254.19" stroke="#979797" stroke-width="1"/><rect x="1758" y="234.68" width="3" height="7" fill="#979797"/><path d="M1764.5 232.52V261.7" stroke="#3f82bb" stroke-width="1"/><rect x="1763" y="233.35" width="3" height="18.34" fill="#3f82bb"/><path d="M1769.5 253.36V255.86" stroke="#3f82bb" stroke-width="1"/><rect x="1768" y="253.36" width="3" height="2.5" fill="#3f82bb"/><path d="M1774.5 242.02V256.7" stroke="#979797" stroke-width="1"/><rect x="1773" y="244.19" width="3" height="12.17" fill="#979797"/><path d="M1779.5 225.01V245.86" stroke="#979797" stroke-width="1"/><rect x="1778" y="230.02" width="3" height="15.34" fill="#979797"/><path d="M1784.5 229.68V232.52" stroke="#979797" stroke-width="1"/><rect x="1783" y="230.02" width="3" height="1.2" fill="#979797"/><path d="M1789.5 229.18V233.35" stroke="#979797" stroke-width="1"/><rect x="1788" y="229.18" width="3" height="1.2" fill="#979797"/><path d="M1794.5 228.68V232.52" stroke="#979797" stroke-width="1"/><rect x="1793" y="228.68" width="3" height="1.2" fill="#979797"/><path d="M1799.5 230.02V232.52" stroke="#3f82bb" stroke-width="1"/><rect x="1798" y="230.02" width="3" height="2.5" fill="#3f82bb"/><path d="M1804.5 230V233" stroke="#3f82bb" stroke-width="1"/><rect x="1803" y="230" width="3" height="3" fill="#3f82bb"/><path d="M1809.5 229.6V244" stroke="#3f82bb" stroke-width="1"/><rect x="1808" y="229.6" width="3" height="14.4" fill="#3f82bb"/><path d="M1814.5 235V244" stroke="#979797" stroke-width="1"/><rect x="1813" y="235" width="3" height="9" fill="#979797"/><path d="M1819.5 232V237" stroke="#979797" stroke-width="1"/><rect x="1818" y="233.5" width="3" height="1.5" fill="#979797"/><path d="M1824.5 233V238" stroke="#979797" stroke-width="1"/><rect x="1823" y="234.5" width="3" height="1.5" fill="#979797"/><path d="M1829.5 226V235" stroke="#979797" stroke-width="1"/><rect x="1828" y="226" width="3" height="9" fill="#979797"/><path d="M1834.5 215V226" stroke="#979797" stroke-width="1"/><rect x="1833" y="215" width="3" height="11" fill="#979797"/><path d="M1839.5 213V222" stroke="#3f82bb" stroke-width="1"/><rect x="1838" y="213" width="3" height="9" fill="#3f82bb"/><path d="M1844.5 208V224" stroke="#3f82bb" stroke-width="1"/><rect x="1843" y="213" width="3" height="11" fill="#3f82bb"/><path d="M1849.5 222V230" stroke="#3f82bb" stroke-width="1"/><rect x="1848" y="222" width="3" height="8" fill="#3f82bb"/><path d="M1854.5 230V250" stroke="#3f82bb" stroke-width="1"/><rect x="1853" y="230" width="3" height="20" fill="#3f82bb"/><path d="M1859.5 237V248" stroke="#979797" stroke-width="1"/><rect x="1858" y="237" width="3" height="11" fill="#979797"/><path d="M275 275L425 218" stroke="#1fc01f" stroke-width="1.3" stroke-dasharray="1.6 4" fill="none"/><path d="M425 218L445 198" stroke="#1fc01f" stroke-width="1.3" stroke-dasharray="1.6 4" fill="none"/><path d="M263 228L275 275" stroke="#d01c1c" stroke-width="1.3" stroke-dasharray="1.6 4" fill="none"/><path d="M380 238L425 218" stroke="#d01c1c" stroke-width="1.3" stroke-dasharray="1.6 4" fill="none"/><path d="M447 200L785 218.5" stroke="#d01c1c" stroke-width="1.3" stroke-dasharray="1.6 4" fill="none"/><path d="M785 219L820 201" stroke="#d01c1c" stroke-width="1.3" stroke-dasharray="1.6 4" fill="none"/><path d="M820 201L905 177" stroke="#1fc01f" stroke-width="1.3" stroke-dasharray="1.6 4" fill="none"/><path d="M905 177L951 221" stroke="#d01c1c" stroke-width="1.3" stroke-dasharray="1.6 4" fill="none"/><path d="M949 180L949 470" stroke="#1fc01f" stroke-width="1.3" stroke-dasharray="1.6 4" fill="none"/><path d="M953 175L953 350" stroke="#d01c1c" stroke-width="1.3" stroke-dasharray="1.6 4" fill="none"/><path d="M957 300L957 470" stroke="#1fc01f" stroke-width="1.3" stroke-dasharray="1.6 4" fill="none"/><path d="M961 330L961 440" stroke="#d01c1c" stroke-width="1.3" stroke-dasharray="1.6 4" fill="none"/><path d="M964 270L968 470" stroke="#1fc01f" stroke-width="1.3" stroke-dasharray="1.6 4" fill="none"/><path d="M975 330L975 420" stroke="#d01c1c" stroke-width="1.3" stroke-dasharray="1.6 4" fill="none"/><path d="M1000 370L1000 440" stroke="#1fc01f" stroke-width="1.3" stroke-dasharray="1.6 4" fill="none"/><path d="M1010 345L1014 420" stroke="#d01c1c" stroke-width="1.3" stroke-dasharray="1.6 4" fill="none"/><path d="M1048 235L1048 385" stroke="#1fc01f" stroke-width="1.3" stroke-dasharray="1.6 4" fill="none"/><path d="M1052 205L1056 240" stroke="#d01c1c" stroke-width="1.3" stroke-dasharray="1.6 4" fill="none"/><path d="M1020 430L1045 380" stroke="#1fc01f" stroke-width="1.3" stroke-dasharray="1.6 4" fill="none"/><path d="M1070 368L1095 372" stroke="#1fc01f" stroke-width="1.3" stroke-dasharray="1.6 4" fill="none"/><path d="M1095 372L1150 347" stroke="#1fc01f" stroke-width="1.3" stroke-dasharray="1.6 4" fill="none"/><path d="M1120 348L1150 348" stroke="#d01c1c" stroke-width="1.3" stroke-dasharray="1.6 4" fill="none"/><path d="M1165 305L1210 318" stroke="#d01c1c" stroke-width="1.3" stroke-dasharray="1.6 4" fill="none"/><path d="M1210 320L1235 308" stroke="#d01c1c" stroke-width="1.3" stroke-dasharray="1.6 4" fill="none"/><path d="M1235 310L1250 225" stroke="#1fc01f" stroke-width="1.3" stroke-dasharray="1.6 4" fill="none"/><path d="M1250 218L1275 262" stroke="#d01c1c" stroke-width="1.3" stroke-dasharray="1.6 4" fill="none"/><path d="M1275 262L1310 318" stroke="#d01c1c" stroke-width="1.3" stroke-dasharray="1.6 4" fill="none"/><path d="M1310 312L1330 240" stroke="#1fc01f" stroke-width="1.3" stroke-dasharray="1.6 4" fill="none"/><path d="M1331 256L1382 256" stroke="#d01c1c" stroke-width="1.3" stroke-dasharray="1.6 4" fill="none"/><path d="M1385 258L1405 215" stroke="#1fc01f" stroke-width="1.3" stroke-dasharray="1.6 4" fill="none"/><path d="M1405 215L1420 222" stroke="#d01c1c" stroke-width="1.3" stroke-dasharray="1.6 4" fill="none"/><path d="M1420 226L1430 215" stroke="#1fc01f" stroke-width="1.3" stroke-dasharray="1.6 4" fill="none"/><path d="M1430 215L1470 250" stroke="#d01c1c" stroke-width="1.3" stroke-dasharray="1.6 4" fill="none"/><path d="M1470 250L1480 240" stroke="#1fc01f" stroke-width="1.3" stroke-dasharray="1.6 4" fill="none"/><path d="M1480 255L1535 332" stroke="#d01c1c" stroke-width="1.3" stroke-dasharray="1.6 4" fill="none"/><path d="M1535 332L1699 238" stroke="#1fc01f" stroke-width="1.3" stroke-dasharray="1.6 4" fill="none"/><path d="M1700 238.5L1862 238.5" stroke="#d01c1c" stroke-width="1.3" stroke-dasharray="1.6 4" fill="none"/><path d="M274 275l4 -2.4v4.8z" fill="#22e622"/><path d="M380 238l-4 -2.4v4.8z" fill="#f01818"/><path d="M424 218l4 -2.4v4.8z" fill="#22e622"/><path d="M447 200l-4 -2.4v4.8z" fill="#f01818"/><path d="M774 217l4 -2.4v4.8z" fill="#22e622"/><path d="M789 219l-4 -2.4v4.8z" fill="#f01818"/><path d="M820 201l4 -2.4v4.8z" fill="#22e622"/><path d="M905 177l-4 -2.4v4.8z" fill="#f01818"/><path d="M950 221l-4 -2.4v4.8z" fill="#f01818"/><path d="M1235 310l4 -2.4v4.8z" fill="#22e622"/><path d="M1250 219l-4 -2.4v4.8z" fill="#f01818"/><path d="M1275 262l-4 -2.4v4.8z" fill="#f01818"/><path d="M1310 312l4 -2.4v4.8z" fill="#22e622"/><path d="M1335 256l-4 -2.4v4.8z" fill="#f01818"/><path d="M1382 256l-4 -2.4v4.8z" fill="#f01818"/><path d="M1480 255l-4 -2.4v4.8z" fill="#f01818"/><path d="M1535 332l4 -2.4v4.8z" fill="#22e622"/><path d="M1701 238.5l-4 -2.4v4.8z" fill="#f01818"/><path d="M1048 300l4 -2.4v4.8z" fill="#22e622"/><path d="M1048 238l-4 -2.4v4.8z" fill="#f01818"/><path d="M1058 238l-4 -2.4v4.8z" fill="#f01818"/><path d="M1095 372l4 -2.4v4.8z" fill="#22e622"/><path d="M1150 348l-4 -2.4v4.8z" fill="#f01818"/><path d="M1150 347l4 -2.4v4.8z" fill="#22e622"/><path d="M1010 380l-4 -2.4v4.8z" fill="#f01818"/><path d="M1000 390l4 -2.4v4.8z" fill="#22e622"/><path d="M962 332l-4 -2.4v4.8z" fill="#f01818"/><path d="M964 300l4 -2.4v4.8z" fill="#22e622"/><path d="M953 290l-4 -2.4v4.8z" fill="#f01818"/><path d="M949 245l4 -2.4v4.8z" fill="#22e622"/><path d="M965 270l-4 -2.4v4.8z" fill="#f01818"/><path d="M1020 430l4 -2.4v4.8z" fill="#22e622"/><path d="M1070 368l4 -2.4v4.8z" fill="#22e622"/><path d="M1165 305l-4 -2.4v4.8z" fill="#f01818"/><path d="M1210 319l-4 -2.4v4.8z" fill="#f01818"/><path d="M1235 308l-4 -2.4v4.8z" fill="#f01818"/><path d="M1385 258l4 -2.4v4.8z" fill="#22e622"/><path d="M1420 226l4 -2.4v4.8z" fill="#22e622"/><path d="M270 288.4h9l-4.5 -4.6z" fill="#14e614"/><path d="M270 306.9h9l-4.5 -4.6z" fill="#14e614"/><path d="M253.5 209.5h9l-4.5 4.6z" fill="#f01414"/><path d="M253.5 228.6h9l-4.5 4.6z" fill="#f01414"/><path d="M375.5 201.2h9l-4.5 4.6z" fill="#f01414"/><path d="M375.5 220.3h9l-4.5 4.6z" fill="#f01414"/><path d="M440.5 173h9l-4.5 4.6z" fill="#f01414"/><path d="M440.5 192.1h9l-4.5 4.6z" fill="#f01414"/><path d="M420.5 245.4h9l-4.5 -4.6z" fill="#14e614"/><path d="M420.5 263.9h9l-4.5 -4.6z" fill="#14e614"/><path d="M780.5 183h9l-4.5 4.6z" fill="#f01414"/><path d="M780.5 202.1h9l-4.5 4.6z" fill="#f01414"/><path d="M815.5 217.4h9l-4.5 -4.6z" fill="#14e614"/><path d="M815.5 235.9h9l-4.5 -4.6z" fill="#14e614"/><path d="M770.5 252.4h9l-4.5 -4.6z" fill="#14e614"/><path d="M770.5 270.9h9l-4.5 -4.6z" fill="#14e614"/><path d="M900.5 144h9l-4.5 4.6z" fill="#f01414"/><path d="M900.5 163.1h9l-4.5 4.6z" fill="#f01414"/><path d="M945.5 138h9l-4.5 4.6z" fill="#f01414"/><path d="M945.5 157.1h9l-4.5 4.6z" fill="#f01414"/><path d="M945.5 150h9l-4.5 4.6z" fill="#f01414"/><path d="M945.5 169.1h9l-4.5 4.6z" fill="#f01414"/><path d="M945.5 269.4h9l-4.5 -4.6z" fill="#14e614"/><path d="M945.5 287.9h9l-4.5 -4.6z" fill="#14e614"/><path d="M945.5 281.9h9l-4.5 -4.6z" fill="#14e614"/><path d="M945.5 300.4h9l-4.5 -4.6z" fill="#14e614"/><path d="M995.5 249h9l-4.5 4.6z" fill="#f01414"/><path d="M995.5 268.1h9l-4.5 4.6z" fill="#f01414"/><path d="M1051.5 175.5h9l-4.5 4.6z" fill="#f01414"/><path d="M1051.5 194.6h9l-4.5 4.6z" fill="#f01414"/><path d="M1045.5 180h9l-4.5 4.6z" fill="#f01414"/><path d="M1045.5 199.1h9l-4.5 4.6z" fill="#f01414"/><path d="M1048.5 283.4h9l-4.5 -4.6z" fill="#14e614"/><path d="M1048.5 301.9h9l-4.5 -4.6z" fill="#14e614"/><path d="M1085.5 310h9l-4.5 4.6z" fill="#f01414"/><path d="M1085.5 329.1h9l-4.5 4.6z" fill="#f01414"/><path d="M1115.5 319h9l-4.5 4.6z" fill="#f01414"/><path d="M1115.5 338.1h9l-4.5 4.6z" fill="#f01414"/><path d="M1160.5 282h9l-4.5 4.6z" fill="#f01414"/><path d="M1160.5 301.1h9l-4.5 4.6z" fill="#f01414"/><path d="M1205.5 295h9l-4.5 4.6z" fill="#f01414"/><path d="M1205.5 314.1h9l-4.5 4.6z" fill="#f01414"/><path d="M1230.5 322.4h9l-4.5 -4.6z" fill="#14e614"/><path d="M1230.5 340.9h9l-4.5 -4.6z" fill="#14e614"/><path d="M1200.5 344.4h9l-4.5 -4.6z" fill="#14e614"/><path d="M1200.5 362.9h9l-4.5 -4.6z" fill="#14e614"/><path d="M1145.5 366.4h9l-4.5 -4.6z" fill="#14e614"/><path d="M1145.5 384.9h9l-4.5 -4.6z" fill="#14e614"/><path d="M1090.5 399.4h9l-4.5 -4.6z" fill="#14e614"/><path d="M1090.5 417.9h9l-4.5 -4.6z" fill="#14e614"/><path d="M1065.5 411.4h9l-4.5 -4.6z" fill="#14e614"/><path d="M1065.5 429.9h9l-4.5 -4.6z" fill="#14e614"/><path d="M1040.5 401.4h9l-4.5 -4.6z" fill="#14e614"/><path d="M1040.5 419.9h9l-4.5 -4.6z" fill="#14e614"/><path d="M955.5 396.4h9l-4.5 -4.6z" fill="#14e614"/><path d="M955.5 414.9h9l-4.5 -4.6z" fill="#14e614"/><path d="M955.5 408.4h9l-4.5 -4.6z" fill="#14e614"/><path d="M955.5 426.9h9l-4.5 -4.6z" fill="#14e614"/><path d="M975.5 403.9h9l-4.5 -4.6z" fill="#14e614"/><path d="M975.5 422.4h9l-4.5 -4.6z" fill="#14e614"/><path d="M990.5 429.4h9l-4.5 -4.6z" fill="#14e614"/><path d="M990.5 447.9h9l-4.5 -4.6z" fill="#14e614"/><path d="M970.5 444.4h9l-4.5 -4.6z" fill="#14e614"/><path d="M970.5 462.9h9l-4.5 -4.6z" fill="#14e614"/><path d="M965.5 458.4h9l-4.5 -4.6z" fill="#14e614"/><path d="M965.5 476.9h9l-4.5 -4.6z" fill="#14e614"/><path d="M1007.5 462.9h9l-4.5 -4.6z" fill="#14e614"/><path d="M1007.5 481.4h9l-4.5 -4.6z" fill="#14e614"/><path d="M993.5 463.4h9l-4.5 -4.6z" fill="#14e614"/><path d="M993.5 481.9h9l-4.5 -4.6z" fill="#14e614"/><path d="M990.5 320h9l-4.5 4.6z" fill="#f01414"/><path d="M990.5 339.1h9l-4.5 4.6z" fill="#f01414"/><path d="M970.5 328h9l-4.5 4.6z" fill="#f01414"/><path d="M970.5 347.1h9l-4.5 4.6z" fill="#f01414"/><path d="M960.5 334h9l-4.5 4.6z" fill="#f01414"/><path d="M960.5 353.1h9l-4.5 4.6z" fill="#f01414"/><path d="M959.5 340h9l-4.5 4.6z" fill="#f01414"/><path d="M959.5 359.1h9l-4.5 4.6z" fill="#f01414"/><path d="M1005.5 335h9l-4.5 4.6z" fill="#f01414"/><path d="M1005.5 354.1h9l-4.5 4.6z" fill="#f01414"/><path d="M1035.5 345h9l-4.5 4.6z" fill="#f01414"/><path d="M1035.5 364.1h9l-4.5 4.6z" fill="#f01414"/><path d="M1245.5 163h9l-4.5 4.6z" fill="#f01414"/><path d="M1245.5 182.1h9l-4.5 4.6z" fill="#f01414"/><path d="M1325.5 215h9l-4.5 4.6z" fill="#f01414"/><path d="M1325.5 234.1h9l-4.5 4.6z" fill="#f01414"/><path d="M1275.5 232h9l-4.5 4.6z" fill="#f01414"/><path d="M1275.5 251.1h9l-4.5 4.6z" fill="#f01414"/><path d="M1270.5 273.4h9l-4.5 -4.6z" fill="#14e614"/><path d="M1270.5 291.9h9l-4.5 -4.6z" fill="#14e614"/><path d="M1305.5 342.4h9l-4.5 -4.6z" fill="#14e614"/><path d="M1305.5 360.9h9l-4.5 -4.6z" fill="#14e614"/><path d="M1375.5 209h9l-4.5 4.6z" fill="#f01414"/><path d="M1375.5 228.1h9l-4.5 4.6z" fill="#f01414"/><path d="M1400.5 193.5h9l-4.5 4.6z" fill="#f01414"/><path d="M1400.5 212.6h9l-4.5 4.6z" fill="#f01414"/><path d="M1425.5 186h9l-4.5 4.6z" fill="#f01414"/><path d="M1425.5 205.1h9l-4.5 4.6z" fill="#f01414"/><path d="M1415.5 233.4h9l-4.5 -4.6z" fill="#14e614"/><path d="M1415.5 251.9h9l-4.5 -4.6z" fill="#14e614"/><path d="M1475.5 212h9l-4.5 4.6z" fill="#f01414"/><path d="M1475.5 231.1h9l-4.5 4.6z" fill="#f01414"/><path d="M1465.5 264.4h9l-4.5 -4.6z" fill="#14e614"/><path d="M1465.5 282.9h9l-4.5 -4.6z" fill="#14e614"/><path d="M1376.5 284.9h9l-4.5 -4.6z" fill="#14e614"/><path d="M1376.5 303.4h9l-4.5 -4.6z" fill="#14e614"/><path d="M1382.5 285.4h9l-4.5 -4.6z" fill="#14e614"/><path d="M1382.5 303.9h9l-4.5 -4.6z" fill="#14e614"/><path d="M1530.5 356.4h9l-4.5 -4.6z" fill="#14e614"/><path d="M1530.5 374.9h9l-4.5 -4.6z" fill="#14e614"/><path d="M1695.5 209h9l-4.5 4.6z" fill="#f01414"/><path d="M1695.5 228.1h9l-4.5 4.6z" fill="#f01414"/><path d="M955 110.5h9l-4.5 4.6z" fill="#f01414"/><text x="274.5" y="298.5" text-anchor="middle" textLength="81" fill="#d8d8d8" font-size="9">1903-EURUSD1902</text><text x="274.5" y="315.8" text-anchor="middle" fill="#d8d8d8" font-size="9">3.9</text><text x="258" y="226" text-anchor="middle" textLength="81" fill="#d8d8d8" font-size="9">1902-EURUSD1901</text><text x="380" y="217.7" text-anchor="middle" textLength="81" fill="#d8d8d8" font-size="9">1904-EURUSD1903</text><text x="380" y="198.5" text-anchor="middle" fill="#d8d8d8" font-size="9">3.8</text><text x="445" y="189.5" text-anchor="middle" textLength="81" fill="#d8d8d8" font-size="9">1906-EURUSD1905</text><text x="445" y="170.3" text-anchor="middle" fill="#d8d8d8" font-size="9">1.9</text><text x="425" y="255.5" text-anchor="middle" textLength="81" fill="#d8d8d8" font-size="9">1905-EURUSD1904</text><text x="425" y="272.8" text-anchor="middle" fill="#d8d8d8" font-size="9">-2.1</text><text x="785" y="199.5" text-anchor="middle" textLength="81" fill="#d8d8d8" font-size="9">1908-EURUSD1907</text><text x="785" y="180.3" text-anchor="middle" fill="#d8d8d8" font-size="9">-0.2</text><text x="820" y="227.5" text-anchor="middle" textLength="81" fill="#d8d8d8" font-size="9">1909-EURUSD1908</text><text x="820" y="244.8" text-anchor="middle" fill="#d8d8d8" font-size="9">-2.1</text><text x="775" y="262.5" text-anchor="middle" textLength="81" fill="#d8d8d8" font-size="9">1907-EURUSD1906</text><text x="775" y="279.8" text-anchor="middle" fill="#d8d8d8" font-size="9">1.8</text><text x="905" y="160.5" text-anchor="middle" textLength="81" fill="#d8d8d8" font-size="9">1910-EURUSD1909</text><text x="905" y="141.3" text-anchor="middle" fill="#d8d8d8" font-size="9">2.4</text><text x="950" y="154.5" text-anchor="middle" textLength="81" fill="#d8d8d8" font-size="9">1912-EURUSD1911</text><text x="950" y="135.3" text-anchor="middle" fill="#d8d8d8" font-size="9">-0.4</text><text x="950" y="166.5" text-anchor="middle" textLength="81" fill="#d8d8d8" font-size="9">1914-EURUSD1913</text><text x="950" y="279.5" text-anchor="middle" textLength="81" fill="#d8d8d8" font-size="9">1913-EURUSD1912</text><text x="950" y="292" text-anchor="middle" textLength="81" fill="#d8d8d8" font-size="9">1911-EURUSD1910</text><text x="950" y="309.3" text-anchor="middle" fill="#d8d8d8" font-size="9">-1.8</text><text x="1000" y="265.5" text-anchor="middle" textLength="81" fill="#d8d8d8" font-size="9">1946-EURUSD1945</text><text x="1000" y="246.3" text-anchor="middle" fill="#d8d8d8" font-size="9">6</text><text x="1056" y="192" text-anchor="middle" textLength="81" fill="#d8d8d8" font-size="9">1954-EURUSD1953</text><text x="1056" y="172.8" text-anchor="middle" fill="#d8d8d8" font-size="9">3</text><text x="1050" y="196.5" text-anchor="middle" textLength="81" fill="#d8d8d8" font-size="9">1952-EURUSD1951</text><text x="1050" y="177.3" text-anchor="middle" fill="#d8d8d8" font-size="9">15.7</text><text x="1053" y="293.5" text-anchor="middle" textLength="81" fill="#d8d8d8" font-size="9">1953-EURUSD1952</text><text x="1053" y="310.8" text-anchor="middle" fill="#d8d8d8" font-size="9">2.1</text><text x="1090" y="326.5" text-anchor="middle" textLength="81" fill="#d8d8d8" font-size="9">1956-EURUSD1955</text><text x="1090" y="307.3" text-anchor="middle" fill="#d8d8d8" font-size="9">-0.2</text><text x="1120" y="335.5" text-anchor="middle" textLength="81" fill="#d8d8d8" font-size="9">1958-EURUSD1957</text><text x="1120" y="316.3" text-anchor="middle" fill="#d8d8d8" font-size="9">2</text><text x="1165" y="298.5" text-anchor="middle" textLength="81" fill="#d8d8d8" font-size="9">1960-EURUSD1959</text><text x="1165" y="279.3" text-anchor="middle" fill="#d8d8d8" font-size="9">3.6</text><text x="1210" y="311.5" text-anchor="middle" textLength="81" fill="#d8d8d8" font-size="9">1962-EURUSD1961</text><text x="1210" y="292.3" text-anchor="middle" fill="#d8d8d8" font-size="9">-1.8</text><text x="1235" y="332.5" text-anchor="middle" textLength="81" fill="#d8d8d8" font-size="9">1963-EURUSD1962</text><text x="1235" y="349.8" text-anchor="middle" fill="#d8d8d8" font-size="9">-1.0</text><text x="1205" y="354.5" text-anchor="middle" textLength="81" fill="#d8d8d8" font-size="9">1961-EURUSD1960</text><text x="1205" y="371.8" text-anchor="middle" fill="#d8d8d8" font-size="9">0.0</text><text x="1150" y="376.5" text-anchor="middle" textLength="81" fill="#d8d8d8" font-size="9">1959-EURUSD1958</text><text x="1150" y="393.8" text-anchor="middle" fill="#d8d8d8" font-size="9">0.0</text><text x="1095" y="409.5" text-anchor="middle" textLength="81" fill="#d8d8d8" font-size="9">1957-EURUSD1956</text><text x="1095" y="426.8" text-anchor="middle" fill="#d8d8d8" font-size="9">-0.5</text><text x="1070" y="421.5" text-anchor="middle" textLength="81" fill="#d8d8d8" font-size="9">1955-EURUSD1954</text><text x="1070" y="438.8" text-anchor="middle" fill="#d8d8d8" font-size="9">13.8</text><text x="1045" y="411.5" text-anchor="middle" textLength="81" fill="#d8d8d8" font-size="9">1951-EURUSD1950</text><text x="1045" y="428.8" text-anchor="middle" fill="#d8d8d8" font-size="9">-2.4</text><text x="960" y="406.5" text-anchor="middle" textLength="81" fill="#d8d8d8" font-size="9">1933-EURUSD1932</text><text x="960" y="418.5" text-anchor="middle" textLength="81" fill="#d8d8d8" font-size="9">1931-EURUSD1930</text><text x="960" y="435.8" text-anchor="middle" fill="#d8d8d8" font-size="9">18.</text><text x="980" y="414" text-anchor="middle" textLength="81" fill="#d8d8d8" font-size="9">1943-EURUSD1942</text><text x="980" y="431.3" text-anchor="middle" fill="#d8d8d8" font-size="9">-2.5</text><text x="995" y="439.5" text-anchor="middle" textLength="81" fill="#d8d8d8" font-size="9">1945-EURUSD1944</text><text x="995" y="456.8" text-anchor="middle" fill="#d8d8d8" font-size="9">-0.3</text><text x="975" y="454.5" text-anchor="middle" textLength="81" fill="#d8d8d8" font-size="9">1941-EURUSD1940</text><text x="970" y="468.5" text-anchor="middle" textLength="81" fill="#d8d8d8" font-size="9">1939-EURUSD1938</text><text x="1012" y="473" text-anchor="middle" textLength="81" fill="#d8d8d8" font-size="9">1949-EURUSD1948</text><text x="998" y="473.5" text-anchor="middle" textLength="81" fill="#d8d8d8" font-size="9">1947-EURUSD1946</text><text x="995" y="336.5" text-anchor="middle" textLength="81" fill="#d8d8d8" font-size="9">1944-EURUSD1943</text><text x="995" y="317.3" text-anchor="middle" fill="#d8d8d8" font-size="9">-1.6</text><text x="975" y="344.5" text-anchor="middle" textLength="81" fill="#d8d8d8" font-size="9">1942-EURUSD1941</text><text x="975" y="325.3" text-anchor="middle" fill="#d8d8d8" font-size="9">4.8</text><text x="965" y="350.5" text-anchor="middle" textLength="81" fill="#d8d8d8" font-size="9">1938-EURUSD1937</text><text x="964" y="356.5" text-anchor="middle" textLength="81" fill="#d8d8d8" font-size="9">1936-EURUSD1935</text><text x="1010" y="351.5" text-anchor="middle" textLength="81" fill="#d8d8d8" font-size="9">1948-EURUSD1947</text><text x="1010" y="332.3" text-anchor="middle" fill="#d8d8d8" font-size="9">1.7</text><text x="1040" y="361.5" text-anchor="middle" textLength="81" fill="#d8d8d8" font-size="9">1950-EURUSD1949</text><text x="1040" y="342.3" text-anchor="middle" fill="#d8d8d8" font-size="9">1.8</text><text x="1250" y="179.5" text-anchor="middle" textLength="81" fill="#d8d8d8" font-size="9">1964-EURUSD1963</text><text x="1250" y="160.3" text-anchor="middle" fill="#d8d8d8" font-size="9">9.8</text><text x="1330" y="231.5" text-anchor="middle" textLength="81" fill="#d8d8d8" font-size="9">1968-EURUSD1967</text><text x="1330" y="212.3" text-anchor="middle" fill="#d8d8d8" font-size="9">5.6</text><text x="1280" y="248.5" text-anchor="middle" textLength="81" fill="#d8d8d8" font-size="9">1966-EURUSD1965</text><text x="1280" y="229.3" text-anchor="middle" fill="#d8d8d8" font-size="9">-2.3</text><text x="1275" y="283.5" text-anchor="middle" textLength="81" fill="#d8d8d8" font-size="9">1965-EURUSD1964</text><text x="1275" y="300.8" text-anchor="middle" fill="#d8d8d8" font-size="9">3.7</text><text x="1310" y="352.5" text-anchor="middle" textLength="81" fill="#d8d8d8" font-size="9">1967-EURUSD1966</text><text x="1310" y="369.8" text-anchor="middle" fill="#d8d8d8" font-size="9">3.6</text><text x="1380" y="225.5" text-anchor="middle" textLength="81" fill="#d8d8d8" font-size="9">1970-EURUSD1969</text><text x="1380" y="206.3" text-anchor="middle" fill="#d8d8d8" font-size="9">-0.1</text><text x="1405" y="210" text-anchor="middle" textLength="81" fill="#d8d8d8" font-size="9">1972-EURUSD1971</text><text x="1405" y="190.8" text-anchor="middle" fill="#d8d8d8" font-size="9">-0.4</text><text x="1430" y="202.5" text-anchor="middle" textLength="81" fill="#d8d8d8" font-size="9">1974-EURUSD1973</text><text x="1430" y="183.3" text-anchor="middle" fill="#d8d8d8" font-size="9">-0.5</text><text x="1420" y="243.5" text-anchor="middle" textLength="81" fill="#d8d8d8" font-size="9">1973-EURUSD1972</text><text x="1420" y="260.8" text-anchor="middle" fill="#d8d8d8" font-size="9">-2.5</text><text x="1480" y="228.5" text-anchor="middle" textLength="81" fill="#d8d8d8" font-size="9">1976-EURUSD1975</text><text x="1480" y="209.3" text-anchor="middle" fill="#d8d8d8" font-size="9">-2.2</text><text x="1470" y="274.5" text-anchor="middle" textLength="81" fill="#d8d8d8" font-size="9">1975-EURUSD1974</text><text x="1470" y="291.8" text-anchor="middle" fill="#d8d8d8" font-size="9">1.8</text><text x="1381" y="295" text-anchor="middle" textLength="81" fill="#d8d8d8" font-size="9">1969-EURUSD1968</text><text x="1381" y="312.3" text-anchor="middle" fill="#d8d8d8" font-size="9">-0.2</text><text x="1387" y="295.5" text-anchor="middle" textLength="81" fill="#d8d8d8" font-size="9">1971-EURUSD1970</text><text x="1387" y="312.8" text-anchor="middle" fill="#d8d8d8" font-size="9">1.4</text><text x="1535" y="366.5" text-anchor="middle" textLength="81" fill="#d8d8d8" font-size="9">1977-EURUSD1976</text><text x="1535" y="383.8" text-anchor="middle" fill="#d8d8d8" font-size="9">8</text><text x="1700" y="225.5" text-anchor="middle" textLength="81" fill="#d8d8d8" font-size="9">1978-EURUSD1977</text><text x="1700" y="206.3" text-anchor="middle" fill="#d8d8d8" font-size="9">10</text><text x="950" y="124.5" text-anchor="middle" fill="#d8d8d8" font-size="9">-2.7</text><text x="980" y="318" text-anchor="middle" fill="#d8d8d8" font-size="9">1.8</text><text x="948" y="322" text-anchor="middle" fill="#d8d8d8" font-size="9">4.</text><text x="955" y="336" text-anchor="middle" fill="#d8d8d8" font-size="9">5.</text><text x="962" y="434" text-anchor="middle" fill="#d8d8d8" font-size="9">16.</text><text x="962" y="447" text-anchor="middle" fill="#d8d8d8" font-size="9">9.5</text></g><path d="M262 540L268 539.23L274 539.75L280 539L286.33 538.65L292.67 537.37L299 537L305 537.99L311 538.94L317 540L322.6 539.98L328.2 539.95L333.8 538.91L339.4 538.63L345 539L350.5 539.35L356 538.82L361.5 539.16L367 538.2L372.5 538.68L378 538.7L384.5 540.12L391 541L396.8 540.47L402.6 541.13L408.4 540.88L414.2 539.64L420 540L425 539.56L430 540.3L435 540.9L440 540.36L445 540.28L450 540.66L455 540.31L460 541L465 540.78L470 541.15L475 541.33L480 541.12L485 541.23L490 541.33L495 541.73L500 541.64L505 542L510 541.28L515 542.12L520 541.64L525 541.6L530 540.91L535 541.73L540 541L545 541.43L550 540.55L555 540.8L560 541.27L565 541.25L570 541.52L575 540.91L580 541L585 541.27L590 540.95L595 540.39L600 540.61L605 540.83L610 540.67L615 540.13L620 540L625.67 539.94L631.33 539.11L637 539.19L642.67 539.69L648.33 539.06L654 539L659.11 538.72L664.22 539.28L669.33 539.58L674.44 539.65L679.56 539.41L684.67 539.59L689.78 539.79L694.89 540.22L700 540L705.25 539.92L710.5 539.66L715.75 539.66L721 539L726.25 538.91L731.5 539.59L736.75 539.82L742 539.25L747.25 538.9L752.5 538.52L757.75 538.81L763 538.7L768.4 539.54L773.8 539.54L779.2 539.53L784.6 540.17L790 540L795.67 540.35L801.33 541.35L807 542L812.2 543.28L817.4 543.57L822.6 544.17L827.8 544.68L833 545.7L838.4 545.62L843.8 545.97L849.2 544.69L854.6 545.48L860 545L865.33 545.22L870.67 545.13L876 544.79L881.33 544.7L886.67 544.19L892 544.07L897.33 543.74L902.67 543.13L908 543.5L913.67 543.44L919.33 542.58L925 542L934 540L940 541L947 542L953 548L959 559.7L961 548L964.6 531L968 528L973 526L979 526.64L985 528L990 528.51L995 529L1000 525.98L1005 523L1013 520L1022 519L1030 518L1036 520L1043 521.6L1050 515L1055.5 510.83L1061 507L1068 503L1074 500.6L1079.5 501.12L1085 502L1090 502.31L1095 502.68L1100 502.8L1105 502.98L1110 502.85L1115 502.38L1120 503L1125 503.01L1130 503.28L1135 504L1140.33 504.27L1145.67 504.77L1151 504.5L1160 501L1165 501.56L1170 501.76L1175 501.98L1180 501.51L1185 502L1190 503.08L1195 503.54L1200 504L1205 504L1210 504.42L1215 504.92L1220 506L1226 507.51L1232 508.4L1240 504L1249 500.7L1254.33 500.5L1259.67 500.43L1265 501L1271.17 501.48L1277.33 501.48L1283.5 502L1289 501.15L1294.5 500.92L1300 501L1305.5 500.96L1311 500.45L1316.5 500.5L1322 500.7L1328.5 499.6L1335 498L1343 497.7L1349.5 498.8L1356 500L1365 498.5L1371 498.34L1377 498.6L1385 501L1394.5 503.3L1399.67 503.84L1404.83 503.86L1410 505L1416.2 505.73L1422.4 506.64L1428.6 507.6L1433.95 507.33L1439.3 507.33L1444.65 508.38L1450 508L1455.67 508.15L1461.33 507.92L1467 508.4L1473.5 509.33L1480 510L1488 510.5L1495 508L1501 506.3L1507.33 506.58L1513.67 505.52L1520 506L1525.33 505.25L1530.67 505.24L1536 505.76L1541.33 504.93L1546.67 505.41L1552 505L1557.6 505.21L1563.2 505.05L1568.8 504.66L1574.4 505.57L1580 505L1585 505.23L1590 504.77L1595 504.29L1600 504.5L1605 504.59L1610 504.21L1615 504.34L1620 503.95L1625 504.24L1630 504L1635 503.33L1640 503.48L1645 504.14L1650 503.89L1655 503.3L1662 501L1667.6 500L1673.2 499.64L1678.8 500.18L1684.4 499.4L1690 499.5L1695 499.93L1700 499.59L1705 499.1L1710 498.8L1715 499L1720 498.41L1725 499.45L1730 498.45L1735 499.38L1740 499L1749 501L1754.2 501.45L1759.4 500.88L1764.6 500.31L1769.8 501.04L1775 500.5L1780 501.17L1785 500.94L1790 500.81L1795 500.75L1800 501L1805 500.9L1810 500.81L1815 501.46L1820 501.25L1825 501.05L1830 501.5L1835.5 500.94L1841 501.53L1846.5 501.01L1852 501.17L1857.5 500.87L1863 501" fill="none" stroke="#4a93bd" stroke-width="1.1"/><path d="M262 664.7L268.5 664.65L275 663.5L280.5 663.54L286 662.5L293 662.47L300 663.5L305.67 663.4L311.33 664.7L317 664.7L322.5 664.87L328 664.67L333.5 664.12L339 664.36L344.5 664.24L350 664L355 664.15L360 663.69L365 664.07L370 664.07L375 664.52L380 664.89L385 664.89L390 664.45L395 664.38L400 664.5L405 664.15L410 663.8L415 663.72L420 664.17L425 663.93L430 663.93L435 664L440 663.97L445 663.03L450 662.5L455.5 662.17L461 661.7L466.8 661.54L472.6 661.45L478.4 661.97L484.2 661.9L490 662.5L495.43 662.66L500.87 663.4L506.3 663.16L511.73 662.72L517.17 663.72L522.6 663.4L527.94 663.7L533.29 663.57L538.63 663.72L543.97 663.49L549.31 663.46L554.66 662.88L560 663L565 663.55L570 663.5L575 662.52L580 663.2L585 663.13L590 662.8L595 662.86L600 662.8L605.4 662.76L610.8 663.25L616.2 662.71L621.6 663.08L627 662.47L632.4 663.08L637.8 663.07L643.2 662.51L648.6 662.61L654 662.5L659.11 662.89L664.22 662.55L669.33 662.15L674.44 661.72L679.56 661.73L684.67 662.07L689.78 661.32L694.89 662.1L700 661.5L705.12 661.16L710.25 661.87L715.38 661.08L720.5 661.8L725.62 661.43L730.75 661.13L735.88 661.08L741 661L746.57 661.32L752.14 661.39L757.71 661.2L763.29 661.22L768.86 661.73L774.43 662.38L780 662L785 662.32L790 661.84L795 662.91L800 662.97L805 663.36L810 662.68L815 663.52L820 663.4L825 662.82L830 663.48L835 662.98L840 662.87L845 663.6L850 662.63L855 663.08L860 663L865.33 663.37L870.67 662.58L876 662.49L881.33 663.23L886.67 662.63L892 662.93L897.33 662.05L902.67 662.39L908 662.5L915 661.36L922 661L928 660.46L934 659.5L939.5 659.75L945 661L950.5 663.4L956 664.7L960 655L964.6 643L968 638L973 635.4L979 634.38L985 634.5L992.3 634.53L999.6 634L1008 630L1017 627.5L1023.5 626.18L1030 626L1036.5 625.41L1043 625.4L1050 621L1056.5 616.6L1065 613L1074 611L1081 611.63L1088 611.5L1094 610.84L1100 611L1105.67 611.29L1111.33 612.56L1117 613L1122.75 612.36L1128.5 611.45L1134.25 612.09L1140 611L1145.42 610.2L1150.83 609.68L1156.25 609.66L1161.67 609.6L1167.08 609.37L1172.5 608.7L1178 608.5L1183.5 609.02L1189 608.92L1194.5 609.68L1200 610L1205.33 610.6L1210.67 610.85L1216 611.33L1221.33 611.44L1226.67 611.85L1232 611.7L1240 609L1249 606.6L1254.33 606.81L1259.67 606.5L1265 606.5L1271.17 606.2L1277.33 606.76L1283.5 606.6L1289 606.01L1294.5 605.39L1300 605.5L1305.5 605.16L1311 605.4L1316.5 604.23L1322 604.4L1327.67 603.8L1333.33 602.87L1339 602.3L1344.17 602.3L1349.33 601.84L1354.5 602.8L1359.67 601.94L1364.83 602.34L1370 602.2L1375.8 602.12L1381.6 601.66L1387.4 602.33L1393.2 601.85L1399 602.3L1404.17 602.05L1409.33 602.31L1414.5 602.74L1419.67 602.95L1424.83 603.88L1430 604L1435.29 604.25L1440.57 605.07L1445.86 605.25L1451.14 605.56L1456.43 604.89L1461.71 605.39L1467 605.7L1472.25 605.08L1477.5 605.16L1482.75 604.87L1488 604.4L1494.5 603.71L1501 602.3L1506.1 602.47L1511.2 601.85L1516.3 601.97L1521.4 602.01L1526.5 601.31L1531.6 601.26L1536.7 601.63L1541.8 601.19L1546.9 601.85L1552 601.5L1557.33 601.2L1562.67 601.04L1568 601.15L1573.33 601.22L1578.67 601.22L1584 601.59L1589.33 601.54L1594.67 601.36L1600 601.6L1605 601.76L1610 601.24L1615 602.06L1620 602.12L1625 601.83L1630 601.47L1635 601.55L1640 601.62L1645 600.98L1650 601.41L1655 601.5L1662 599.5L1667.6 598L1673 597.95L1678.4 597.45L1683.8 597.26L1689.2 598.03L1694.6 597.42L1700 597.5L1705 597.49L1710 597.93L1715 597.52L1720 597.1L1725 597.89L1730 597.12L1735 596.66L1740 597.2L1745 597.52L1750 596.92L1755 597.27L1760 598.01L1765 597.91L1770 597.22L1775 597.84L1780 598L1785 597.96L1790 598.11L1795 597.84L1800 598.36L1805 597.8L1810 598.12L1815 598.28L1820 598.5L1825.38 599.08L1830.75 598.12L1836.12 598.99L1841.5 598.38L1846.88 598.9L1852.25 598.75L1857.62 598.89L1863 599" fill="none" stroke="#4a93bd" stroke-width="1.1"/><g fill="#0c0cf0"><rect x="261" y="726.3" width="3" height="1.2"/><rect x="266" y="727.5" width="3" height="1.2"/><rect x="276" y="725" width="3" height="2.5"/><rect x="296" y="724.5" width="3" height="3"/><rect x="301" y="725" width="3" height="2.5"/><rect x="311" y="726.3" width="3" height="1.2"/><rect x="316" y="726.3" width="3" height="1.2"/><rect x="341" y="725" width="3" height="2.5"/><rect x="346" y="726.3" width="3" height="1.2"/><rect x="356" y="727.5" width="3" height="1.2"/><rect x="371" y="727.5" width="3" height="1.2"/><rect x="381" y="727.5" width="3" height="1.2"/><rect x="386" y="725.5" width="3" height="2"/><rect x="396" y="727.5" width="3" height="1.2"/><rect x="411" y="727.5" width="3" height="1.2"/><rect x="426" y="726.3" width="3" height="1.2"/><rect x="461" y="727.5" width="3" height="1.2"/><rect x="486" y="727.5" width="3" height="1.2"/><rect x="491" y="726.3" width="3" height="1.2"/><rect x="511" y="726.3" width="3" height="1.2"/><rect x="516" y="726.3" width="3" height="1.2"/><rect x="521" y="727.5" width="3" height="2.5"/><rect x="536" y="725" width="3" height="2.5"/><rect x="541" y="727.5" width="3" height="1.2"/><rect x="556" y="726.3" width="3" height="1.2"/><rect x="566" y="726.3" width="3" height="1.2"/><rect x="571" y="726.3" width="3" height="1.2"/><rect x="586" y="727.5" width="3" height="1.2"/><rect x="591" y="726.3" width="3" height="1.2"/><rect x="601" y="727.5" width="3" height="1.2"/><rect x="616" y="727.5" width="3" height="1.2"/><rect x="626" y="726.3" width="3" height="1.2"/><rect x="646" y="726.3" width="3" height="1.2"/><rect x="656" y="727.5" width="3" height="1.2"/><rect x="671" y="727.5" width="3" height="2.5"/><rect x="681" y="727.5" width="3" height="1.2"/><rect x="696" y="727.5" width="3" height="2"/><rect x="711" y="727.5" width="3" height="1.2"/><rect x="721" y="725" width="3" height="2.5"/><rect x="731" y="727.5" width="3" height="2"/><rect x="736" y="727.5" width="3" height="1.2"/><rect x="741" y="727.5" width="3" height="1.2"/><rect x="746" y="726.3" width="3" height="1.2"/><rect x="751" y="727.5" width="3" height="1.2"/><rect x="761" y="727.5" width="3" height="1.2"/><rect x="766" y="726.3" width="3" height="1.2"/><rect x="776" y="724.5" width="3" height="3"/><rect x="781" y="725" width="3" height="2.5"/><rect x="791" y="727.5" width="3" height="1.2"/><rect x="796" y="727.5" width="3" height="1.2"/><rect x="806" y="727.5" width="3" height="2"/><rect x="821" y="726.3" width="3" height="1.2"/><rect x="826" y="725.5" width="3" height="2"/><rect x="841" y="726.3" width="3" height="1.2"/><rect x="846" y="725.5" width="3" height="2"/><rect x="851" y="726.3" width="3" height="1.2"/><rect x="861" y="726.3" width="3" height="1.2"/><rect x="871" y="726.3" width="3" height="1.2"/><rect x="876" y="727.5" width="3" height="1.2"/><rect x="891" y="727.5" width="3" height="1.2"/><rect x="896" y="727.5" width="3" height="2.5"/><rect x="901" y="726.3" width="3" height="1.2"/><rect x="921" y="727.5" width="3" height="3.5"/><rect x="926" y="727.5" width="3" height="2.5"/><rect x="941" y="727.5" width="3" height="2.5"/><rect x="956" y="727.5" width="3" height="44.5"/><rect x="961" y="727.5" width="3" height="42.5"/><rect x="966" y="727.5" width="3" height="46"/><rect x="971" y="727.5" width="3" height="35.5"/><rect x="986" y="726.3" width="3" height="1.2"/><rect x="991" y="725.5" width="3" height="2"/><rect x="1001" y="727.5" width="3" height="3.5"/><rect x="1006" y="727.5" width="3" height="4.5"/><rect x="1011" y="727.5" width="3" height="8.5"/><rect x="1016" y="727.5" width="3" height="9.5"/><rect x="1021" y="727.5" width="3" height="4.5"/><rect x="1031" y="726.3" width="3" height="1.2"/><rect x="1036" y="724" width="3" height="3.5"/><rect x="1041" y="710" width="3" height="17.5"/><rect x="1046" y="697" width="3" height="30.5"/><rect x="1051" y="694" width="3" height="33.5"/><rect x="1056" y="715" width="3" height="12.5"/><rect x="1061" y="724" width="3" height="3.5"/><rect x="1066" y="719" width="3" height="8.5"/><rect x="1071" y="723" width="3" height="4.5"/><rect x="1076" y="725" width="3" height="2.5"/><rect x="1086" y="727.5" width="3" height="2.5"/><rect x="1091" y="727.5" width="3" height="2"/><rect x="1096" y="722" width="3" height="5.5"/><rect x="1101" y="720" width="3" height="7.5"/><rect x="1106" y="719" width="3" height="8.5"/><rect x="1111" y="722" width="3" height="5.5"/><rect x="1116" y="724" width="3" height="3.5"/><rect x="1121" y="725" width="3" height="2.5"/><rect x="1126" y="725" width="3" height="2.5"/><rect x="1136" y="727.5" width="3" height="2.5"/><rect x="1141" y="727.5" width="3" height="1.2"/><rect x="1146" y="727.5" width="3" height="2.5"/><rect x="1151" y="719" width="3" height="8.5"/><rect x="1156" y="721" width="3" height="6.5"/><rect x="1161" y="724" width="3" height="3.5"/><rect x="1171" y="726.3" width="3" height="1.2"/><rect x="1186" y="726.3" width="3" height="1.2"/><rect x="1196" y="727.5" width="3" height="2.5"/><rect x="1211" y="726.3" width="3" height="1.2"/><rect x="1221" y="727.5" width="3" height="1.2"/><rect x="1231" y="724" width="3" height="3.5"/><rect x="1236" y="718" width="3" height="9.5"/><rect x="1241" y="712" width="3" height="15.5"/><rect x="1246" y="720" width="3" height="7.5"/><rect x="1256" y="727.5" width="3" height="2.5"/><rect x="1261" y="726.3" width="3" height="1.2"/><rect x="1276" y="727.5" width="3" height="1.2"/><rect x="1281" y="727.5" width="3" height="4.5"/><rect x="1286" y="727.5" width="3" height="5.5"/><rect x="1291" y="727.5" width="3" height="3.5"/><rect x="1296" y="727.5" width="3" height="2.5"/><rect x="1306" y="726.3" width="3" height="1.2"/><rect x="1316" y="724" width="3" height="3.5"/><rect x="1321" y="726.3" width="3" height="1.2"/><rect x="1331" y="727.5" width="3" height="1.2"/><rect x="1336" y="725" width="3" height="2.5"/><rect x="1351" y="726.3" width="3" height="1.2"/><rect x="1356" y="726.3" width="3" height="1.2"/><rect x="1361" y="725" width="3" height="2.5"/><rect x="1376" y="724" width="3" height="3.5"/><rect x="1381" y="725" width="3" height="2.5"/><rect x="1391" y="725.5" width="3" height="2"/><rect x="1396" y="726.3" width="3" height="1.2"/><rect x="1406" y="727.5" width="3" height="2"/><rect x="1411" y="724" width="3" height="3.5"/><rect x="1416" y="725" width="3" height="2.5"/><rect x="1421" y="726.3" width="3" height="1.2"/><rect x="1446" y="727.5" width="3" height="1.2"/><rect x="1466" y="726.3" width="3" height="1.2"/><rect x="1476" y="726.3" width="3" height="1.2"/><rect x="1481" y="727.5" width="3" height="1.2"/><rect x="1486" y="727.5" width="3" height="9.5"/><rect x="1491" y="727.5" width="3" height="5.5"/><rect x="1496" y="727.5" width="3" height="3.5"/><rect x="1501" y="727.5" width="3" height="2.5"/><rect x="1511" y="727.5" width="3" height="3.5"/><rect x="1516" y="727.5" width="3" height="2.5"/><rect x="1531" y="726.3" width="3" height="1.2"/><rect x="1536" y="727.5" width="3" height="1.2"/><rect x="1591" y="727.5" width="3" height="1.2"/><rect x="1601" y="726.3" width="3" height="1.2"/><rect x="1611" y="727.5" width="3" height="1.2"/><rect x="1621" y="727.5" width="3" height="1.2"/><rect x="1631" y="726.3" width="3" height="1.2"/><rect x="1651" y="726.3" width="3" height="1.2"/><rect x="1656" y="722" width="3" height="5.5"/><rect x="1661" y="719" width="3" height="8.5"/><rect x="1666" y="721" width="3" height="6.5"/><rect x="1671" y="724" width="3" height="3.5"/><rect x="1676" y="725.5" width="3" height="2"/><rect x="1686" y="726.3" width="3" height="1.2"/><rect x="1696" y="726.3" width="3" height="1.2"/><rect x="1706" y="726.3" width="3" height="1.2"/><rect x="1711" y="727.5" width="3" height="1.2"/><rect x="1716" y="725" width="3" height="2.5"/><rect x="1721" y="727.5" width="3" height="1.2"/><rect x="1731" y="727.5" width="3" height="1.2"/><rect x="1746" y="726.3" width="3" height="1.2"/><rect x="1751" y="727.5" width="3" height="1.2"/><rect x="1756" y="726.3" width="3" height="1.2"/><rect x="1761" y="727.5" width="3" height="1.2"/><rect x="1766" y="727.5" width="3" height="1.2"/><rect x="1771" y="727.5" width="3" height="1.2"/><rect x="1776" y="727.5" width="3" height="2.5"/><rect x="1781" y="727.5" width="3" height="1.2"/><rect x="1786" y="727.5" width="3" height="2"/><rect x="1796" y="727.5" width="3" height="1.2"/><rect x="1801" y="727.5" width="3" height="1.2"/><rect x="1806" y="727.5" width="3" height="1.2"/><rect x="1821" y="727.5" width="3" height="1.2"/><rect x="1831" y="727.5" width="3" height="2"/><rect x="1846" y="726.3" width="3" height="1.2"/><rect x="1851" y="727.5" width="3" height="1.2"/><rect x="1856" y="726.3" width="3" height="1.2"/></g><path d="M262 727.5H1863.5" stroke="#22d022" stroke-width="1.3" stroke-dasharray="6 4"/><path d="M267.5 484.5h10v10h-10zM267.5 484.5l10 10M277.5 484.5l-10 10" fill="none" stroke="#6a6a6a"/><path d="M267.5 587.5h10v10h-10zM267.5 587.5l10 10M277.5 587.5l-10 10" fill="none" stroke="#6a6a6a"/><path d="M267.5 689.5h10v10h-10zM267.5 689.5l10 10M277.5 689.5l-10 10" fill="none" stroke="#6a6a6a"/><text x="282" y="494" textLength="68" fill="#d8d8d8" font-size="9">Equity : 1166,77</text><path d="M353.5 490.5h12" stroke="#4a93bd" stroke-width="1.6"/><text x="282" y="597" textLength="87" fill="#d8d8d8" font-size="9">Profit/Loss : 350,112</text><path d="M372.5 593.5h12" stroke="#4a93bd" stroke-width="1.6"/><text x="282" y="699.5" textLength="162" fill="#d8d8d8">WaddahAT (<tspan fill="#1a1aff">Values: 0,606625</tspan><tspan fill="#1a1aff">, </tspan><tspan fill="#22dd22">Zero: 0</tspan>)</text><text x="1903.5" y="118" text-anchor="end" fill="#d8d8d8" font-size="9">1,3675</text><text x="1903.5" y="165.36" text-anchor="end" fill="#d8d8d8" font-size="9">1,3670</text><text x="1903.5" y="212.72" text-anchor="end" fill="#d8d8d8" font-size="9">1,3665</text><text x="1903.5" y="260.08" text-anchor="end" fill="#d8d8d8" font-size="9">1,3660</text><text x="1903.5" y="307.44" text-anchor="end" fill="#d8d8d8" font-size="9">1,3655</text><text x="1903.5" y="354.8" text-anchor="end" fill="#d8d8d8" font-size="9">1,3650</text><text x="1903.5" y="402.16" text-anchor="end" fill="#d8d8d8" font-size="9">1,3645</text><text x="1903.5" y="449.52" text-anchor="end" fill="#d8d8d8" font-size="9">1,3640</text><text x="1899" y="491.5" text-anchor="end" fill="#d8d8d8" font-size="9">1173</text><text x="1899" y="521.5" text-anchor="end" fill="#d8d8d8" font-size="9">1170</text><text x="1899" y="551.5" text-anchor="end" fill="#d8d8d8" font-size="9">1166</text><text x="1903" y="594.5" text-anchor="end" fill="#d8d8d8" font-size="9">362,91</text><text x="1903" y="624.5" text-anchor="end" fill="#d8d8d8" font-size="9">357,62</text><text x="1903" y="654.5" text-anchor="end" fill="#d8d8d8" font-size="9">352,33</text><text x="1901" y="697.5" text-anchor="end" fill="#d8d8d8" font-size="9">19,53</text><text x="1901" y="727.5" text-anchor="end" fill="#d8d8d8" font-size="9">1,792</text><text x="1901" y="757.5" text-anchor="end" fill="#d8d8d8" font-size="9">-15,94</text><path d="M1863.5 115.0h5M1863.5 162.36h5M1863.5 209.72h5M1863.5 257.08h5M1863.5 304.44h5M1863.5 351.8h5M1863.5 399.15999999999997h5M1863.5 446.52h5M1863.5 488.5h5M1863.5 518.5h5M1863.5 548.5h5M1863.5 591.5h5M1863.5 621.5h5M1863.5 651.5h5M1863.5 694.5h5M1863.5 724.5h5M1863.5 754.5h5" stroke="#c8c8c8" stroke-width="1"/><rect x="1866" y="598" width="49" height="13" fill="#fff"/><text x="1903" y="608" text-anchor="end" fill="#222" font-size="9">360,62</text><path d="M1829 112h10l-5 5.5z" fill="#e8e8e8"/><path d="M262 783.5H1863.5M262 796.5H1863.5" stroke="#d8d8d8" stroke-width="1"/><path d="M352.5 783V796M652.5 783V796M952.5 783V796M1252.5 783V796M1552.5 783V796M1852.5 783V796" stroke="#d8d8d8" stroke-width="1"/><text x="267.5" y="794" fill="#d8d8d8" font-size="9">16:00</text><text x="357.5" y="794" fill="#d8d8d8" font-size="9">17:00</text><text x="657.5" y="794" fill="#d8d8d8" font-size="9">18:00</text><text x="957.5" y="794" fill="#d8d8d8" font-size="9">19:00</text><text x="1257.5" y="794" fill="#d8d8d8" font-size="9">20:00</text><text x="1557.5" y="794" fill="#d8d8d8" font-size="9">21:00</text><rect x="860" y="783" width="30" height="24" fill="#fff"/><text x="875" y="799.5" text-anchor="middle" fill="#222" font-size="9">18:44</text><text x="1063" y="805.5" text-anchor="middle" textLength="52" fill="#d8d8d8" font-size="9">29 ene 2014</text></svg>
<!-- p_bottom -->
<div style="left:260px;top:815px;width:1659px;height:1px;background:#828282;"></div>
<div style="left:260px;top:842px;width:1658px;height:170.5px;border:1px solid #a9a9a9;background:#fff;"></div>
<div style="left:262px;top:846px;width:1653.5px;height:164.5px;border:1px solid #8f8f8f;border-top-color:#a0a0a0;background:#f0f0f0;box-shadow:0 0 0 1px #fff;"></div>
<div style="left:262px;top:819px;width:148px;height:23.5px;background:linear-gradient(#ededed,#e3e3e3);border:1px solid #bcbcbc;border-bottom:none;"></div>
<span style="top:826.69px;font:normal 11px/1 'Liberation Sans', sans-serif;color:#111;white-space:pre;letter-spacing:-0.39px;left:276.25px;">Resumen de Posición</span>
<svg style="left:390px;top:827px;width:10px;height:10px" viewBox="0 0 10 10"><path d="M6.5 3.5v5h-6v-6h4" fill="none" stroke="#666" stroke-width="1"/><path d="M4 6L8.5 1.5M5.5 1h3.5v3.5" fill="none" stroke="#666" stroke-width="1"/></svg>
<div style="left:409px;top:819px;width:98px;height:23.5px;background:linear-gradient(#ededed,#e3e3e3);border:1px solid #bcbcbc;border-bottom:none;"></div>
<span style="top:826.69px;font:normal 11px/1 'Liberation Sans', sans-serif;color:#111;white-space:pre;letter-spacing:-0.44px;left:425.5px;">Posiciones</span>
<svg style="left:488px;top:827px;width:10px;height:10px" viewBox="0 0 10 10"><path d="M6.5 3.5v5h-6v-6h4" fill="none" stroke="#666" stroke-width="1"/><path d="M4 6L8.5 1.5M5.5 1h3.5v3.5" fill="none" stroke="#666" stroke-width="1"/></svg>
<div style="left:506px;top:819px;width:90px;height:23.5px;background:linear-gradient(#ededed,#e3e3e3);border:1px solid #bcbcbc;border-bottom:none;"></div>
<span style="top:826.69px;font:normal 11px/1 'Liberation Sans', sans-serif;color:#111;white-space:pre;letter-spacing:-0.24px;left:522.5px;">Órdenes</span>
<svg style="left:576.75px;top:827px;width:10px;height:10px" viewBox="0 0 10 10"><path d="M6.5 3.5v5h-6v-6h4" fill="none" stroke="#666" stroke-width="1"/><path d="M4 6L8.5 1.5M5.5 1h3.5v3.5" fill="none" stroke="#666" stroke-width="1"/></svg>
<div style="left:595px;top:819px;width:94px;height:23.5px;background:linear-gradient(#ededed,#e3e3e3);border:1px solid #bcbcbc;border-bottom:none;"></div>
<span style="top:826.69px;font:normal 11px/1 'Liberation Sans', sans-serif;color:#111;white-space:pre;letter-spacing:-0.29px;left:611.25px;">Mensajes</span>
<svg style="left:670px;top:827px;width:10px;height:10px" viewBox="0 0 10 10"><path d="M6.5 3.5v5h-6v-6h4" fill="none" stroke="#666" stroke-width="1"/><path d="M4 6L8.5 1.5M5.5 1h3.5v3.5" fill="none" stroke="#666" stroke-width="1"/></svg>
<div style="left:688px;top:819px;width:114px;height:23.5px;background:linear-gradient(#ededed,#e3e3e3);border:1px solid #bcbcbc;border-bottom:none;"></div>
<span style="top:826.69px;font:normal 11px/1 'Liberation Sans', sans-serif;color:#111;white-space:pre;letter-spacing:-0.03px;left:703.25px;">Strategies</span>
<svg style="left:765.5px;top:827px;width:10px;height:10px" viewBox="0 0 10 10"><path d="M6.5 3.5v5h-6v-6h4" fill="none" stroke="#666" stroke-width="1"/><path d="M4 6L8.5 1.5M5.5 1h3.5v3.5" fill="none" stroke="#666" stroke-width="1"/></svg>
<svg style="left:784px;top:828px;width:9px;height:9px" viewBox="0 0 9 9"><path d="M1 1l7 7M8 1l-7 7" stroke="#333" stroke-width="1.4"/></svg>
<div style="left:801px;top:817px;width:145px;height:29.5px;background:#fbfbfb;border:1px solid #c0c0c0;border-bottom:none;"></div>
<span style="top:824.69px;font:normal 11px/1 'Liberation Sans', sans-serif;color:#111;white-space:pre;letter-spacing:-0.21px;left:817px;">Prueba Histórica</span>
<svg style="left:908.75px;top:825px;width:10px;height:10px" viewBox="0 0 10 10"><path d="M6.5 3.5v5h-6v-6h4" fill="none" stroke="#666" stroke-width="1"/><path d="M4 6L8.5 1.5M5.5 1h3.5v3.5" fill="none" stroke="#666" stroke-width="1"/></svg>
<svg style="left:926.75px;top:826px;width:9px;height:9px" viewBox="0 0 9 9"><path d="M1 1l7 7M8 1l-7 7" stroke="#333" stroke-width="1.4"/></svg>
<div style="left:278px;top:862.5px;width:1496.5px;height:23px;background:linear-gradient(#eef4fb,#dfeaf7);border:1px solid #a9b6c6;"></div>
<span style="top:868.94px;font:normal 11px/1 'Liberation Sans', sans-serif;color:#111;white-space:pre;letter-spacing:-0.24px;left:283.75px;">WaddahAttarRenko  -  EUR/USD</span>
<svg style="left:1761px;top:871px;width:9px;height:6px" viewBox="0 0 9 6"><path d="M1 1 L4.5 4.5 L8 1" fill="none" stroke="#333" stroke-width="1.7"/></svg>
<div class="btn" style="left:1781px;top:863px;width:53px;height:21px;"></div>
<span style="top:867.69px;font:normal 11px/1 'Liberation Sans', sans-serif;color:#111;white-space:pre;letter-spacing:-0.14px;left:1795.75px;">Abrir</span>
<div style="left:1841px;top:863px;width:59px;height:21px;background:#efefef;border:1px solid #d9d9d9;"></div>
<span style="top:867.69px;font:normal 11px/1 'Liberation Sans', sans-serif;color:#8c8c8c;white-space:pre;letter-spacing:-0.21px;left:1855.25px;">Editar</span>
<div style="left:282px;top:899.5px;width:13px;height:13px;background:#fff;border:1px solid #3c3c3c;"><svg style="left:0;top:0;width:11px;height:11px" viewBox="0 0 11 11"><path d="M2 5.5 L4.5 8.5 L9 2" fill="none" stroke="#111" stroke-width="1.8"/></svg></div>
<span style="top:900.19px;font:normal 11px/1 'Liberation Sans', sans-serif;color:#111;white-space:pre;letter-spacing:-0.48px;left:298.75px;">Visual mode</span>
<div style="left:282px;top:922px;width:13px;height:13px;background:#fff;border:1px solid #3c3c3c;"></div>
<span style="top:922.69px;font:normal 11px/1 'Liberation Sans', sans-serif;color:#111;white-space:pre;letter-spacing:-0.24px;left:298.75px;">Optimization</span>
<div style="left:282px;top:945px;width:13px;height:13px;background:#fff;border:1px solid #3c3c3c;"><svg style="left:0;top:0;width:11px;height:11px" viewBox="0 0 11 11"><path d="M2 5.5 L4.5 8.5 L9 2" fill="none" stroke="#111" stroke-width="1.8"/></svg></div>
<span style="top:945.69px;font:normal 11px/1 'Liberation Sans', sans-serif;color:#111;white-space:pre;letter-spacing:-0.44px;left:298.75px;">Show messages</span>
<div class="btn" style="left:384px;top:899px;width:65px;height:21px;"></div>
<span style="top:903.69px;font:normal 11px/1 'Liberation Sans', sans-serif;color:#111;white-space:pre;letter-spacing:-0.2px;left:398.25px;">Cuenta</span>
<div class="btn" style="left:457px;top:899px;width:89.5px;height:21px;"></div>
<span style="top:903.69px;font:normal 11px/1 'Liberation Sans', sans-serif;color:#111;white-space:pre;letter-spacing:0.05px;left:471.25px;">Instruments</span>
<div style="left:553px;top:898px;width:343px;height:23.5px;background:linear-gradient(#f3f3f3,#e4e4e4);border:1px solid #acacac;"></div>
<span style="top:905.19px;font:normal 11px/1 'Liberation Sans', sans-serif;color:#111;white-space:pre;letter-spacing:0.07px;left:559px;">2014.01.01 - 2014.01.31</span>
<svg style="left:883.5px;top:907px;width:9px;height:6px" viewBox="0 0 9 6"><path d="M1 1 L4.5 4.5 L8 1" fill="none" stroke="#333" stroke-width="1.7"/></svg>
<div style="left:903px;top:898px;width:265.5px;height:23.5px;background:linear-gradient(#f3f3f3,#e4e4e4);border:1px solid #acacac;"></div>
<span style="top:905.19px;font:normal 11px/1 'Liberation Sans', sans-serif;color:#111;white-space:pre;letter-spacing:-0.45px;left:908px;">Ticks</span>
<svg style="left:1154px;top:907px;width:9px;height:6px" viewBox="0 0 9 6"><path d="M1 1 L4.5 4.5 L8 1" fill="none" stroke="#333" stroke-width="1.7"/></svg>
<div style="left:1175.5px;top:898px;width:168px;height:23.5px;background:#f0f0f0;border:1px solid #c9c9c9;"></div>
<span style="top:905.19px;font:normal 11px/1 'Liberation Sans', sans-serif;color:#8c8c8c;white-space:pre;left:1180px;">Bid</span>
<svg style="left:1329px;top:907px;width:9px;height:6px" viewBox="0 0 9 6"><path d="M1 1 L4.5 4.5 L8 1" fill="none" stroke="#b4b4b4" stroke-width="1.7"/></svg>
<div style="left:1350.5px;top:898px;width:545px;height:23.5px;background:linear-gradient(#f3f3f3,#e4e4e4);border:1px solid #acacac;"></div>
<span style="top:905.19px;font:normal 11px/1 'Liberation Sans', sans-serif;color:#111;white-space:pre;letter-spacing:-0.13px;left:1355.25px;">Procesar todos los vistos</span>
<svg style="left:1881.5px;top:907px;width:9px;height:6px" viewBox="0 0 9 6"><path d="M1 1 L4.5 4.5 L8 1" fill="none" stroke="#333" stroke-width="1.7"/></svg>
<div style="left:1241px;top:916px;width:236px;height:20px;background:rgba(246,246,248,.55);border:1px solid rgba(225,225,230,.7);"></div>
<div style="left:1241px;top:916px;width:21px;height:20px;background:rgba(228,232,240,.6);"></div>
<div style="left:1248px;top:923px;width:6px;height:6px;background:rgba(200,205,215,.8);border-radius:3px;"></div>
<span style="top:920.69px;font:normal 11px/1 'Liberation Sans', sans-serif;color:rgba(205,205,210,.9);white-space:pre;letter-spacing:0.34px;left:1272px;">Recorte rectangular</span>
<div style="left:382px;top:933px;width:22px;height:21.5px;background:#ededed;border:1px solid #d4d4d4;"></div>
<div style="left:410px;top:933px;width:22px;height:21.5px;background:#ededed;border:1px solid #d4d4d4;"></div>
<svg style="left:385px;top:936px;width:16px;height:16px" viewBox="0 0 16 16"><rect x="1.500" y="1.500" width="8" height="10" fill="#f6f6f6" stroke="#aaa"/><rect x="5.500" y="4.500" width="8" height="10" fill="#f6f6f6" stroke="#aaa"/><path d="M7 7.500h5M7 9.500h5M7 11.500h5M3 4h3M3 6h2M3 8h2" stroke="#b8b8b8"/></svg>
<svg style="left:413px;top:936px;width:16px;height:16px" viewBox="0 0 16 16"><rect x="2.500" y="2.500" width="11" height="11" rx="2" fill="#e4e4e4" stroke="#c4c4c4"/><path d="M5.500 5.500l5 5M10.500 5.500l-5 5" stroke="#b0b0b0" stroke-width="1.600"/></svg>
<div class="btn" style="left:443px;top:933px;width:109px;height:21px;"></div>
<span style="top:937.69px;font:normal 11px/1 'Liberation Sans', sans-serif;color:#111;white-space:pre;letter-spacing:-0.18px;left:457.25px;">Custom Settings</span>
<div style="left:557.5px;top:934px;width:818px;height:17.5px;background:#e6e6e6;border:1px solid #bcbcbc;"></div>
<div style="left:559px;top:935.5px;width:815px;height:14.5px;background:#3399fe;"></div>
<span style="top:937.69px;font:normal 11px/1 'Liberation Sans', sans-serif;color:#111;white-space:pre;letter-spacing:0.05px;left:1384.75px;">0 00:00:00</span>
<span style="top:937.69px;font:normal 11px/1 'Liberation Sans', sans-serif;color:#111;white-space:pre;letter-spacing:-0.1px;left:1444.5px;">100%</span>
<span style="top:937.69px;font:normal 11px/1 'Liberation Sans', sans-serif;color:#111;white-space:pre;letter-spacing:-0.19px;left:1484.5px;">Probar velocidad</span>
<span style="top:937.69px;font:normal 11px/1 'Liberation Sans', sans-serif;color:#111;white-space:pre;letter-spacing:-0.74px;left:1576.5px;">Min</span>
<div style="left:1600px;top:943px;width:187px;height:2px;background:#d2d2d2;border-bottom:1px solid #fff;height:3px;"></div>
<div style="left:1786px;top:933.5px;width:5px;height:20.5px;background:#e8e8e8;border:1px solid #a2a2a2;"></div>
<span style="top:937.69px;font:normal 11px/1 'Liberation Sans', sans-serif;color:#111;white-space:pre;letter-spacing:-0.51px;left:1796.5px;">max</span>
<div style="left:1822px;top:933px;width:21.5px;height:21.5px;background:#ededed;border:1px solid #d6d6d6;"></div>
<svg style="left:1824px;top:935px;width:18px;height:18px" viewBox="0 0 18 18"><rect x="2.500" y="2.500" width="13" height="13" rx="2.500" fill="#ececec" stroke="#bdbdbd"/><path d="M4.500 5.500l4 3.500l-4 3.500zM9 5.500l4 3.500l-4 3.500z" fill="#bdbdbd"/></svg>
<div style="left:1848px;top:933px;width:21.5px;height:21.5px;background:#ededed;border:1px solid #d6d6d6;"></div>
<svg style="left:1850px;top:935px;width:18px;height:18px" viewBox="0 0 18 18"><rect x="2.500" y="2.500" width="13" height="13" rx="2.500" fill="#ececec" stroke="#bdbdbd"/><rect x="6" y="6" width="2.500" height="6" fill="#bdbdbd"/><rect x="9.800" y="6" width="2.500" height="6" fill="#bdbdbd"/></svg>
<div style="left:1874px;top:933px;width:21.5px;height:21.5px;background:#ededed;border:1px solid #9a9a9a;"></div>
<svg style="left:1876px;top:935px;width:18px;height:18px" viewBox="0 0 18 18"><rect x="2.500" y="2.500" width="13" height="13" rx="2.500" fill="#f4f4f4" stroke="#333"/><path d="M7 5l5.500 4l-5.500 4z" fill="#222"/></svg>
<div style="left:278px;top:972.5px;width:1623px;height:22.5px;background:linear-gradient(#fff,#f7f7f7);border:1px solid #8c8c8c;"></div>
<div style="left:427.5px;top:974px;width:1px;height:19.5px;background:#e6e6e6;"></div>
<div style="left:1881px;top:973.5px;width:19px;height:20.5px;background:#f0f0f0;"></div>
<span style="top:980.94px;font:normal 11px/1 'Liberation Sans', sans-serif;color:#111;white-space:pre;letter-spacing:-0.21px;left:342px;">Hora</span>
<span style="top:980.94px;font:normal 11px/1 'Liberation Sans', sans-serif;color:#111;white-space:pre;letter-spacing:-0.26px;left:1133.25px;">Mensajes</span>
</div></body></html>
